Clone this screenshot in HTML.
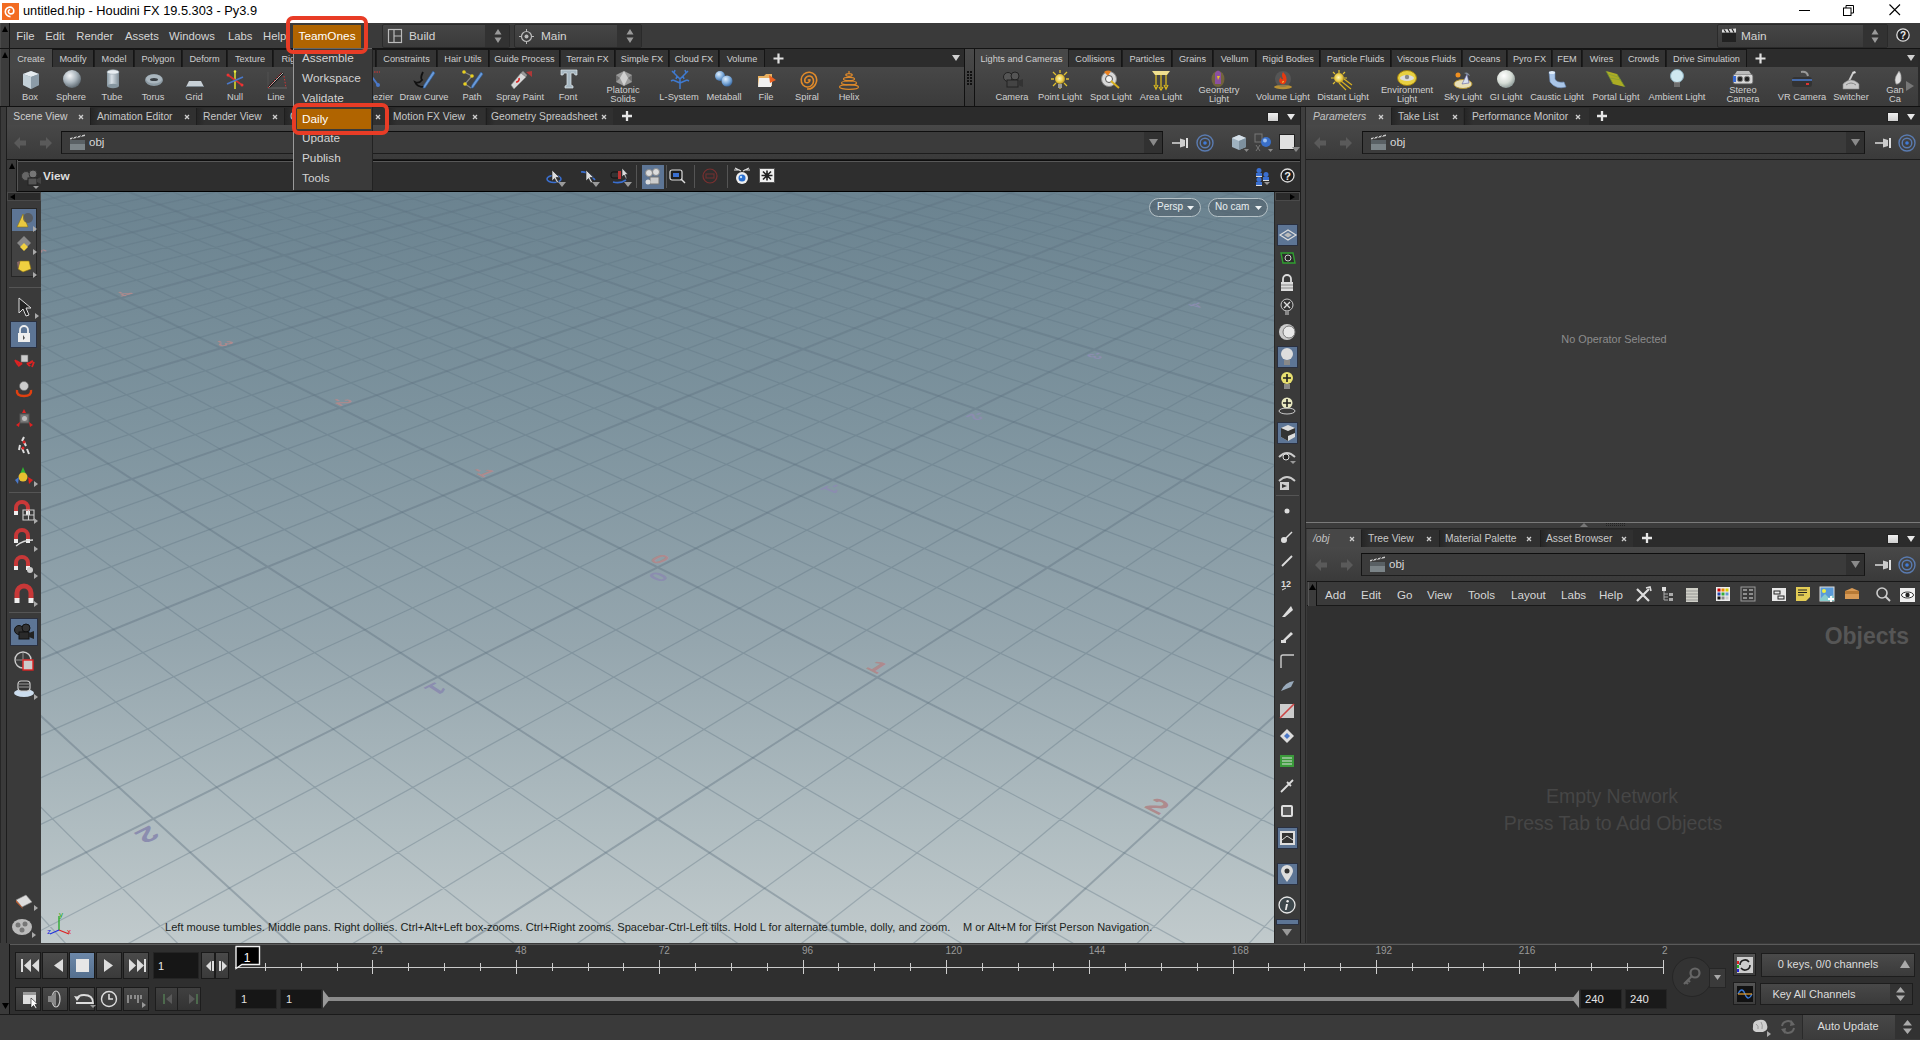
<!DOCTYPE html>
<html><head><meta charset="utf-8"><title>Houdini FX</title>
<style>
html,body{margin:0;padding:0}
body{width:1920px;height:1040px;overflow:hidden;position:relative;background:#3a3a3a;font-family:"Liberation Sans",sans-serif}
.a{position:absolute;box-sizing:border-box}
.t{position:absolute;white-space:pre;line-height:1}
svg.a{overflow:visible}
</style></head><body>
<div class="a" style="left:0px;top:0px;width:1920px;height:23px;background:#ffffff"></div>
<svg class="a" style="left:2px;top:3px;" width="17" height="17" viewBox="0 0 17 17"><rect x="0" y="0" width="17" height="17" fill="#f26b21"/><path d="M8.5 13.6c-2.9 0-5.2-2.2-5.2-4.9 0-2.6 2.1-4.6 4.6-4.6 2.2 0 3.9 1.7 3.9 3.8 0 1.7-1.3 3-3 3-1.4 0-2.4-1-2.4-2.3 0-1 .8-1.8 1.8-1.8" fill="none" stroke="#fff" stroke-width="1.6"/></svg>
<div class="t" style="left:23px;top:5.46px;font-size:12.8px;color:#000000;">untitled.hip - Houdini FX 19.5.303 - Py3.9</div>
<div class="a" style="left:1799px;top:10px;width:11px;height:1px;background:#000"></div>
<svg class="a" style="left:1843px;top:5px;" width="12" height="12" viewBox="0 0 12 12"><rect x="0.5" y="3" width="7.5" height="7.5" fill="none" stroke="#000" stroke-width="1"/><path d="M3 3V0.5H10.5V8H8" fill="none" stroke="#000" stroke-width="1"/></svg>
<svg class="a" style="left:1889px;top:4px;" width="12" height="12" viewBox="0 0 12 12"><path d="M0.5 0.5L11 11M11 0.5L0.5 11" stroke="#000" stroke-width="1.1"/></svg>
<div class="a" style="left:0px;top:23px;width:1920px;height:26px;background:#3a3a3a;border-bottom:1px solid #141414"></div>
<div class="a" style="left:0px;top:23px;width:10px;height:25px;background:#3c3c3c;border-left:1px solid #4a4a4a;border-right:1px solid #111"></div>
<svg class="a" style="left:2px;top:26px;" width="6" height="6" viewBox="0 0 6 6"><path d="M3 0L6 6H0Z" fill="#000"/></svg>
<div class="t" style="left:16.3px;top:31.43px;font-size:11.3px;color:#d6d6d6;">File</div>
<div class="t" style="left:45.3px;top:31.43px;font-size:11.3px;color:#d6d6d6;">Edit</div>
<div class="t" style="left:76.3px;top:31.43px;font-size:11.3px;color:#d6d6d6;">Render</div>
<div class="t" style="left:125px;top:31.43px;font-size:11.3px;color:#d6d6d6;">Assets</div>
<div class="t" style="left:169px;top:31.43px;font-size:11.3px;color:#d6d6d6;">Windows</div>
<div class="t" style="left:228px;top:31.43px;font-size:11.3px;color:#d6d6d6;">Labs</div>
<div class="t" style="left:263px;top:31.43px;font-size:11.3px;color:#d6d6d6;">Help</div>
<div class="a" style="left:382px;top:24px;width:128px;height:24px;background:linear-gradient(#454545,#3a3a3a);border:1px solid #2a2a2a;border-radius:2px"></div>
<div class="a" style="left:485px;top:25px;width:24px;height:22px;background:#323232"></div>
<svg class="a" style="left:494px;top:28px;" width="8" height="16" viewBox="0 0 8 16"><path d="M4 1L7.5 6.5H0.5Z M4 15L7.5 9.5H0.5Z" fill="#9a9a9a"/></svg>
<svg class="a" style="left:388px;top:29px" width="15" height="15"><rect x="0.5" y="0.5" width="13" height="13" fill="none" stroke="#bbb" stroke-width="1.2"/><path d="M6 0.5V13.5M6 7H13.5" stroke="#bbb" stroke-width="1.2"/></svg>
<div class="t" style="left:409px;top:30.51px;font-size:11.8px;color:#d4d4d4;">Build</div>
<div class="a" style="left:514px;top:24px;width:128px;height:24px;background:linear-gradient(#454545,#3a3a3a);border:1px solid #2a2a2a;border-radius:2px"></div>
<div class="a" style="left:617px;top:25px;width:24px;height:22px;background:#323232"></div>
<svg class="a" style="left:626px;top:28px;" width="8" height="16" viewBox="0 0 8 16"><path d="M4 1L7.5 6.5H0.5Z M4 15L7.5 9.5H0.5Z" fill="#9a9a9a"/></svg>
<svg class="a" style="left:519px;top:29px" width="15" height="15"><circle cx="7.5" cy="7.5" r="5" fill="none" stroke="#bbb" stroke-width="1.2"/><circle cx="7.5" cy="7.5" r="2" fill="#bbb"/><path d="M7.5 0V3M7.5 12V15M0 7.5H3M12 7.5H15" stroke="#bbb"/></svg>
<div class="t" style="left:541px;top:30.51px;font-size:11.8px;color:#d4d4d4;">Main</div>
<div class="a" style="left:1717px;top:24px;width:171px;height:24px;background:linear-gradient(#454545,#3a3a3a);border:1px solid #2a2a2a;border-radius:2px"></div>
<div class="a" style="left:1863px;top:25px;width:24px;height:22px;background:#323232"></div>
<svg class="a" style="left:1871px;top:28px;" width="8" height="16" viewBox="0 0 8 16"><path d="M4 1L7.5 6.5H0.5Z M4 15L7.5 9.5H0.5Z" fill="#9a9a9a"/></svg>
<svg class="a" style="left:1721px;top:28px;" width="16" height="15" viewBox="0 0 16 15"><rect x="1" y="5" width="14" height="9" fill="#222"/><path d="M1 1.5L15 0.5V4.5H1Z" fill="#ddd"/><path d="M3 1.5L5 4.5M7 1L9 4.5M11 0.8L13 4.5" stroke="#222" stroke-width="1.2"/></svg>
<div class="t" style="left:1741px;top:30.51px;font-size:11.8px;color:#d4d4d4;">Main</div>
<svg class="a" style="left:1896px;top:28px;" width="14" height="14" viewBox="0 0 14 14"><circle cx="7" cy="7" r="6.2" fill="#222" stroke="#ddd" stroke-width="1.3"/><text x="7" y="11" font-size="10" font-weight="bold" text-anchor="middle" fill="#eee" font-family="Liberation Sans">?</text></svg>
<div class="a" style="left:0px;top:49px;width:10px;height:57px;background:#3c3c3c;border-left:1px solid #4a4a4a;border-right:1px solid #111"></div>
<svg class="a" style="left:2px;top:52px;" width="6" height="6" viewBox="0 0 6 6"><path d="M3 0L6 6H0Z" fill="#000"/></svg>
<div class="a" style="left:10px;top:49px;width:954px;height:57px;background:#3f3f3f;border-left:1px solid #111"></div>
<div class="a" style="left:10px;top:49px;width:954px;height:18px;background:#2c2c2c"></div>
<div class="a" style="left:10px;top:49px;width:42px;height:19px;background:#474747"></div>
<div class="t" style="left:-269.0px;width:600px;text-align:center;top:54.51px;font-size:9.2px;color:#cfcfcf;">Create</div>
<div class="a" style="left:52px;top:49px;width:42px;height:18px;background:#333333;border:1px solid #151515;border-bottom:none;border-left-color:#1d1d1d"></div>
<div class="t" style="left:-227.0px;width:600px;text-align:center;top:54.51px;font-size:9.2px;color:#cfcfcf;">Modify</div>
<div class="a" style="left:94px;top:49px;width:40px;height:18px;background:#333333;border:1px solid #151515;border-bottom:none;border-left-color:#1d1d1d"></div>
<div class="t" style="left:-186.0px;width:600px;text-align:center;top:54.51px;font-size:9.2px;color:#cfcfcf;">Model</div>
<div class="a" style="left:134px;top:49px;width:48px;height:18px;background:#333333;border:1px solid #151515;border-bottom:none;border-left-color:#1d1d1d"></div>
<div class="t" style="left:-142.0px;width:600px;text-align:center;top:54.51px;font-size:9.2px;color:#cfcfcf;">Polygon</div>
<div class="a" style="left:182px;top:49px;width:45px;height:18px;background:#333333;border:1px solid #151515;border-bottom:none;border-left-color:#1d1d1d"></div>
<div class="t" style="left:-95.5px;width:600px;text-align:center;top:54.51px;font-size:9.2px;color:#cfcfcf;">Deform</div>
<div class="a" style="left:227px;top:49px;width:46px;height:18px;background:#333333;border:1px solid #151515;border-bottom:none;border-left-color:#1d1d1d"></div>
<div class="t" style="left:-50.0px;width:600px;text-align:center;top:54.51px;font-size:9.2px;color:#cfcfcf;">Texture</div>
<div class="a" style="left:273px;top:49px;width:48px;height:18px;background:#333333;border:1px solid #151515;border-bottom:none;border-left-color:#1d1d1d"></div>
<div class="t" style="left:-3.0px;width:600px;text-align:center;top:54.51px;font-size:9.2px;color:#cfcfcf;">Rigging</div>
<div class="a" style="left:321px;top:49px;width:55px;height:18px;background:#333333;border:1px solid #151515;border-bottom:none;border-left-color:#1d1d1d"></div>
<div class="t" style="left:48.5px;width:600px;text-align:center;top:54.51px;font-size:9.2px;color:#cfcfcf;">Characters</div>
<div class="a" style="left:376px;top:49px;width:61px;height:18px;background:#333333;border:1px solid #151515;border-bottom:none;border-left-color:#1d1d1d"></div>
<div class="t" style="left:106.5px;width:600px;text-align:center;top:54.51px;font-size:9.2px;color:#cfcfcf;">Constraints</div>
<div class="a" style="left:437px;top:49px;width:52px;height:18px;background:#333333;border:1px solid #151515;border-bottom:none;border-left-color:#1d1d1d"></div>
<div class="t" style="left:163.0px;width:600px;text-align:center;top:54.51px;font-size:9.2px;color:#cfcfcf;">Hair Utils</div>
<div class="a" style="left:489px;top:49px;width:71px;height:18px;background:#333333;border:1px solid #151515;border-bottom:none;border-left-color:#1d1d1d"></div>
<div class="t" style="left:224.5px;width:600px;text-align:center;top:54.51px;font-size:9.2px;color:#cfcfcf;">Guide Process</div>
<div class="a" style="left:560px;top:49px;width:55px;height:18px;background:#333333;border:1px solid #151515;border-bottom:none;border-left-color:#1d1d1d"></div>
<div class="t" style="left:287.5px;width:600px;text-align:center;top:54.51px;font-size:9.2px;color:#cfcfcf;">Terrain FX</div>
<div class="a" style="left:615px;top:49px;width:54px;height:18px;background:#333333;border:1px solid #151515;border-bottom:none;border-left-color:#1d1d1d"></div>
<div class="t" style="left:342.0px;width:600px;text-align:center;top:54.51px;font-size:9.2px;color:#cfcfcf;">Simple FX</div>
<div class="a" style="left:669px;top:49px;width:50px;height:18px;background:#333333;border:1px solid #151515;border-bottom:none;border-left-color:#1d1d1d"></div>
<div class="t" style="left:394.0px;width:600px;text-align:center;top:54.51px;font-size:9.2px;color:#cfcfcf;">Cloud FX</div>
<div class="a" style="left:719px;top:49px;width:46px;height:18px;background:#333333;border:1px solid #151515;border-bottom:none;border-left-color:#1d1d1d"></div>
<div class="t" style="left:442.0px;width:600px;text-align:center;top:54.51px;font-size:9.2px;color:#cfcfcf;">Volume</div>
<svg class="a" style="left:773px;top:53px;" width="11" height="11" viewBox="0 0 11 11"><path d="M5.5 0.5V10.5M0.5 5.5H10.5" stroke="#e0e0e0" stroke-width="2.2"/></svg>
<svg class="a" style="left:952px;top:55px;" width="8" height="6" viewBox="0 0 8 6"><path d="M0 0H8L4 6Z" fill="#d0d0d0"/></svg>
<div class="a" style="left:10px;top:67px;width:954px;height:39px;background:linear-gradient(#474747,#3b3b3b)"></div>
<div class="a" style="left:964px;top:49px;width:11px;height:57px;background:linear-gradient(#4a4a4a,#3a3a3a);border-left:1px solid #111;border-right:1px solid #111"></div>
<svg class="a" style="left:967px;top:71px;" width="6" height="14" viewBox="0 0 6 14"><rect x="0" y="0" width="2" height="2" fill="#111"/><rect x="0" y="3" width="2" height="2" fill="#111"/><rect x="0" y="6" width="2" height="2" fill="#111"/><rect x="0" y="9" width="2" height="2" fill="#111"/><rect x="0" y="12" width="2" height="2" fill="#111"/><rect x="3" y="0" width="2" height="2" fill="#111"/><rect x="3" y="3" width="2" height="2" fill="#111"/><rect x="3" y="6" width="2" height="2" fill="#111"/><rect x="3" y="9" width="2" height="2" fill="#111"/><rect x="3" y="12" width="2" height="2" fill="#111"/></svg>
<div class="a" style="left:975px;top:49px;width:945px;height:57px;background:#3f3f3f"></div>
<div class="a" style="left:975px;top:49px;width:943px;height:18px;background:#2c2c2c"></div>
<div class="a" style="left:975px;top:49px;width:93px;height:19px;background:#474747"></div>
<div class="t" style="left:721.5px;width:600px;text-align:center;top:54.51px;font-size:9.2px;color:#cfcfcf;">Lights and Cameras</div>
<div class="a" style="left:1068px;top:49px;width:54px;height:18px;background:#333333;border:1px solid #151515;border-bottom:none;border-left-color:#1d1d1d"></div>
<div class="t" style="left:795.0px;width:600px;text-align:center;top:54.51px;font-size:9.2px;color:#cfcfcf;">Collisions</div>
<div class="a" style="left:1122px;top:49px;width:50px;height:18px;background:#333333;border:1px solid #151515;border-bottom:none;border-left-color:#1d1d1d"></div>
<div class="t" style="left:847.0px;width:600px;text-align:center;top:54.51px;font-size:9.2px;color:#cfcfcf;">Particles</div>
<div class="a" style="left:1172px;top:49px;width:41px;height:18px;background:#333333;border:1px solid #151515;border-bottom:none;border-left-color:#1d1d1d"></div>
<div class="t" style="left:892.5px;width:600px;text-align:center;top:54.51px;font-size:9.2px;color:#cfcfcf;">Grains</div>
<div class="a" style="left:1213px;top:49px;width:43px;height:18px;background:#333333;border:1px solid #151515;border-bottom:none;border-left-color:#1d1d1d"></div>
<div class="t" style="left:934.5px;width:600px;text-align:center;top:54.51px;font-size:9.2px;color:#cfcfcf;">Vellum</div>
<div class="a" style="left:1256px;top:49px;width:64px;height:18px;background:#333333;border:1px solid #151515;border-bottom:none;border-left-color:#1d1d1d"></div>
<div class="t" style="left:988.0px;width:600px;text-align:center;top:54.51px;font-size:9.2px;color:#cfcfcf;">Rigid Bodies</div>
<div class="a" style="left:1320px;top:49px;width:71px;height:18px;background:#333333;border:1px solid #151515;border-bottom:none;border-left-color:#1d1d1d"></div>
<div class="t" style="left:1055.5px;width:600px;text-align:center;top:54.51px;font-size:9.2px;color:#cfcfcf;">Particle Fluids</div>
<div class="a" style="left:1391px;top:49px;width:71px;height:18px;background:#333333;border:1px solid #151515;border-bottom:none;border-left-color:#1d1d1d"></div>
<div class="t" style="left:1126.5px;width:600px;text-align:center;top:54.51px;font-size:9.2px;color:#cfcfcf;">Viscous Fluids</div>
<div class="a" style="left:1462px;top:49px;width:45px;height:18px;background:#333333;border:1px solid #151515;border-bottom:none;border-left-color:#1d1d1d"></div>
<div class="t" style="left:1184.5px;width:600px;text-align:center;top:54.51px;font-size:9.2px;color:#cfcfcf;">Oceans</div>
<div class="a" style="left:1507px;top:49px;width:45px;height:18px;background:#333333;border:1px solid #151515;border-bottom:none;border-left-color:#1d1d1d"></div>
<div class="t" style="left:1229.5px;width:600px;text-align:center;top:54.51px;font-size:9.2px;color:#cfcfcf;">Pyro FX</div>
<div class="a" style="left:1552px;top:49px;width:30px;height:18px;background:#333333;border:1px solid #151515;border-bottom:none;border-left-color:#1d1d1d"></div>
<div class="t" style="left:1267.0px;width:600px;text-align:center;top:54.51px;font-size:9.2px;color:#cfcfcf;">FEM</div>
<div class="a" style="left:1582px;top:49px;width:39px;height:18px;background:#333333;border:1px solid #151515;border-bottom:none;border-left-color:#1d1d1d"></div>
<div class="t" style="left:1301.5px;width:600px;text-align:center;top:54.51px;font-size:9.2px;color:#cfcfcf;">Wires</div>
<div class="a" style="left:1621px;top:49px;width:45px;height:18px;background:#333333;border:1px solid #151515;border-bottom:none;border-left-color:#1d1d1d"></div>
<div class="t" style="left:1343.5px;width:600px;text-align:center;top:54.51px;font-size:9.2px;color:#cfcfcf;">Crowds</div>
<div class="a" style="left:1666px;top:49px;width:81px;height:18px;background:#333333;border:1px solid #151515;border-bottom:none;border-left-color:#1d1d1d"></div>
<div class="t" style="left:1406.5px;width:600px;text-align:center;top:54.51px;font-size:9.2px;color:#cfcfcf;">Drive Simulation</div>
<svg class="a" style="left:1755px;top:53px;" width="11" height="11" viewBox="0 0 11 11"><path d="M5.5 0.5V10.5M0.5 5.5H10.5" stroke="#e0e0e0" stroke-width="2.2"/></svg>
<svg class="a" style="left:1907px;top:55px;" width="8" height="6" viewBox="0 0 8 6"><path d="M0 0H8L4 6Z" fill="#d0d0d0"/></svg>
<div class="a" style="left:975px;top:67px;width:943px;height:39px;background:linear-gradient(#474747,#3b3b3b)"></div>
<div class="a" style="left:1918px;top:49px;width:2px;height:57px;background:#2a2a2a"></div>
<div class="a" style="left:0px;top:106px;width:1920px;height:1px;background:#111"></div>
<svg width="0" height="0" style="position:absolute"><defs>
<radialGradient id="gs" cx="0.38" cy="0.32" r="0.7"><stop offset="0" stop-color="#f4f6f8"/><stop offset="0.55" stop-color="#a9b4bc"/><stop offset="1" stop-color="#5d6870"/></radialGradient>
<radialGradient id="gy" cx="0.45" cy="0.45" r="0.6"><stop offset="0" stop-color="#fff8c0"/><stop offset="0.6" stop-color="#e8c840"/><stop offset="1" stop-color="#a08020"/></radialGradient>
<radialGradient id="gw" cx="0.38" cy="0.32" r="0.7"><stop offset="0" stop-color="#ffffff"/><stop offset="0.6" stop-color="#d6ddd6"/><stop offset="1" stop-color="#8d9a98"/></radialGradient>
<linearGradient id="gt" x1="0" x2="1"><stop offset="0" stop-color="#8696a0"/><stop offset="0.4" stop-color="#d8e0e6"/><stop offset="1" stop-color="#7d8c96"/></linearGradient>
<radialGradient id="gb" cx="0.38" cy="0.32" r="0.7"><stop offset="0" stop-color="#e0f0ff"/><stop offset="0.6" stop-color="#7aa8d8"/><stop offset="1" stop-color="#3a68a0"/></radialGradient>
</defs></svg>
<svg class="a" style="left:21px;top:70px;" width="20" height="20" viewBox="0 0 20 20"><path d="M2 4L10 1L18 4V15L10 19L2 15Z" fill="#7f8f9a"/><path d="M2 4L10 7L18 4L10 1Z" fill="#e6ecf0"/><path d="M2 4L10 7V19L2 15Z" fill="#c3d0d8"/><path d="M10 7L18 4V15L10 19Z" fill="#8c9ca8"/></svg>
<svg class="a" style="left:62px;top:69px;" width="20" height="20" viewBox="0 0 20 20"><circle cx="10" cy="10" r="9" fill="url(#gs)"/></svg>
<svg class="a" style="left:106px;top:69px;" width="14" height="20" viewBox="0 0 14 20"><rect x="1" y="3" width="12" height="14" fill="url(#gt)"/><ellipse cx="7" cy="17" rx="6" ry="2.2" fill="#8696a0"/><ellipse cx="7" cy="3" rx="6" ry="2.2" fill="#e8eef2" stroke="#9aa8b0" stroke-width="0.6"/></svg>
<svg class="a" style="left:144px;top:73px;" width="20" height="14" viewBox="0 0 20 14"><ellipse cx="10" cy="7" rx="9" ry="6" fill="#8d9ba4"/><ellipse cx="10" cy="6" rx="8" ry="4.5" fill="#aab6be"/><ellipse cx="10" cy="6.5" rx="4" ry="1.6" fill="#3a3f44"/></svg>
<svg class="a" style="left:185px;top:80px;" width="20" height="8" viewBox="0 0 20 8"><path d="M4 1H16L19 7H1Z" fill="#c8d0d6"/><path d="M1 6H19V7H1Z" fill="#7d8890"/></svg>
<svg class="a" style="left:226px;top:70px;" width="18" height="20" viewBox="0 0 18 20"><path d="M9 1V19" stroke="#c8c830" stroke-width="1.8"/><path d="M2 5L16 15" stroke="#d83030" stroke-width="1.6"/><path d="M1 14L17 7" stroke="#4a78c8" stroke-width="1.6"/><circle cx="2" cy="5" r="1.5" fill="#e33"/><circle cx="16" cy="15" r="1.5" fill="#e33"/><circle cx="9" cy="1.5" r="1.3" fill="#ee4"/></svg>
<svg class="a" style="left:266px;top:70px;" width="22" height="20" viewBox="0 0 22 20"><path d="M2 18H21" stroke="#666" stroke-width="1"/><path d="M2 18V2" stroke="#555" stroke-width="0.8"/><path d="M3 17L17 3" stroke="#111" stroke-width="2.4"/><path d="M3 17L17 3" stroke="#ddd" stroke-width="0.8"/><path d="M2 18L16 2M18 6L20 18" stroke="#d33" stroke-width="0.9" stroke-dasharray="1.5 1.5"/></svg>
<svg class="a" style="left:370px;top:71px;" width="12" height="18" viewBox="0 0 12 18"><path d="M2 6L8 14" stroke="#4a78c8" stroke-width="2"/><circle cx="8" cy="14" r="2" fill="#4a78c8"/><path d="M4 1H10" stroke="#d33" stroke-width="1" stroke-dasharray="1.5 1"/></svg>
<svg class="a" style="left:414px;top:70px;" width="22" height="20" viewBox="0 0 22 20"><path d="M9 2Q6 8 8 10Q5 14 1 12Q3 17 10 17" fill="none" stroke="#111" stroke-width="1.8"/><path d="M19 1L21 3L11 18L9 18L10 15Z" fill="#6a9ad8" stroke="#2a5a98" stroke-width="0.6"/></svg>
<svg class="a" style="left:462px;top:70px;" width="22" height="20" viewBox="0 0 22 20"><path d="M2 2L10 6L3 14L9 18" fill="none" stroke="#888" stroke-width="1.2"/><circle cx="2" cy="2" r="1.8" fill="#e8d020"/><circle cx="10" cy="6" r="1.8" fill="#e8d020"/><circle cx="3" cy="14" r="1.8" fill="#e8d020"/><path d="M19 2L21 4L11 18L9 18L10 15Z" fill="#6a9ad8" stroke="#2a5a98" stroke-width="0.6"/></svg>
<svg class="a" style="left:510px;top:70px;" width="22" height="20" viewBox="0 0 22 20"><path d="M4 19L1 15L11 3L16 7Z" fill="#d8d8d8" stroke="#888" stroke-width="0.6"/><path d="M11 3L13 1L17 5L16 7Z" fill="#999"/><path d="M6 12A3 3 0 0 0 9 8" stroke="#d22" stroke-width="1.6" fill="none"/><path d="M16 2L22 1V7Z" fill="#d33" opacity="0.7"/></svg>
<svg class="a" style="left:560px;top:69px;" width="18" height="20" viewBox="0 0 18 20"><path d="M1 1H17V6H15L14 4H11V16L13 17V19H5V17L7 16V4H4L3 6H1Z" fill="#a8b8c2" stroke="#dfe8ee" stroke-width="0.7"/></svg>
<svg class="a" style="left:614px;top:70px;" width="20" height="17" viewBox="0 0 20 17"><path d="M10 1L18 5L18 12L10 16L2 12L2 5Z" fill="#9a9a9a"/><path d="M10 1L14 8L10 16L6 8Z" fill="#d0d0d0"/><path d="M2 5L6 8L2 12Z M18 5L14 8L18 12Z" fill="#6c6c6c"/></svg>
<svg class="a" style="left:670px;top:70px;" width="20" height="20" viewBox="0 0 20 20"><path d="M10 19V9M10 9L4 3M10 9L16 3M10 13L3 10M10 13L17 10M4 3L2 1M4 3L5 0M16 3L18 1M16 3L15 0M3 10L1 11M17 10L19 11M7 6L6 9M13 6L14 9" stroke="#3f7ad0" stroke-width="1.5" fill="none"/></svg>
<svg class="a" style="left:714px;top:70px;" width="20" height="18" viewBox="0 0 20 18"><circle cx="6" cy="6" r="5" fill="url(#gb)"/><circle cx="13" cy="11" r="5.5" fill="url(#gb)"/></svg>
<svg class="a" style="left:757px;top:71px;" width="20" height="18" viewBox="0 0 20 18"><path d="M1 5H7L9 3H15V15H1Z" fill="#e8b060"/><path d="M2 7H16L14 16H1Z" fill="#f0f0f0"/><path d="M12 4L19 9L13 12Z" fill="#e86020"/></svg>
<svg class="a" style="left:798px;top:70px;" width="20" height="20" viewBox="0 0 20 20"><path d="M10 10.5A1.5 1.5 0 0 1 12 10A3 3 0 0 1 7 12A4.5 4.5 0 0 1 14 7A6 6 0 0 1 5 15A7.5 7.5 0 0 1 17 5A9 9 0 0 1 9 19" fill="none" stroke="#e08a2a" stroke-width="1.6"/></svg>
<svg class="a" style="left:838px;top:70px;" width="22" height="20" viewBox="0 0 22 20"><ellipse cx="11" cy="17" rx="9.5" ry="2.3" fill="none" stroke="#e08a2a" stroke-width="1.2"/><ellipse cx="11" cy="13" rx="7.5" ry="2" fill="none" stroke="#e08a2a" stroke-width="1.2"/><ellipse cx="11" cy="9" rx="5.5" ry="1.7" fill="none" stroke="#e08a2a" stroke-width="1.2"/><ellipse cx="11" cy="5" rx="3.2" ry="1.3" fill="none" stroke="#e08a2a" stroke-width="1.2"/><path d="M11 1V3" stroke="#e08a2a" stroke-width="1.2"/></svg>
<svg class="a" style="left:1002px;top:71px;" width="22" height="18" viewBox="0 0 22 18"><circle cx="6" cy="6" r="4.5" fill="#555" stroke="#222"/><circle cx="13" cy="5" r="4" fill="#555" stroke="#222"/><rect x="5" y="9" width="11" height="7" fill="#444" stroke="#222"/><path d="M16 10L21 8V16L16 14Z" fill="#333"/></svg>
<svg class="a" style="left:1049px;top:70px;" width="22" height="20" viewBox="0 0 22 20"><circle cx="11" cy="9" r="5" fill="url(#gy)"/><path d="M11 0V3M11 15V19M2 9H5M17 9H20M4 2L7 5M18 2L15 5M4 16L7 13M18 16L15 13" stroke="#e0c030" stroke-width="1.3"/><rect x="9" y="14" width="4" height="4" fill="#999"/></svg>
<svg class="a" style="left:1100px;top:70px;" width="22" height="20" viewBox="0 0 22 20"><circle cx="9" cy="9" r="7.5" fill="#d8d8d8" stroke="#888"/><path d="M4 2A8 8 0 0 1 11 1L8 6Z" fill="#e88020"/><circle cx="9" cy="9" r="3.5" fill="#f4f4f4" stroke="#555"/><path d="M11 11L19 18" stroke="#d8b020" stroke-width="2"/></svg>
<svg class="a" style="left:1150px;top:70px;" width="22" height="20" viewBox="0 0 22 20"><path d="M2 1H20L17 5H5Z" fill="#f0e090"/><path d="M6 5V16M11 5V18M16 5V16" stroke="#d8b820" stroke-width="1.3"/><path d="M4 15L6 19L8 15M9 17L11 20L13 17M14 15L16 19L18 15" fill="none" stroke="#d8b820" stroke-width="1.3"/></svg>
<svg class="a" style="left:1211px;top:69px;" width="14" height="18" viewBox="0 0 14 18"><ellipse cx="7" cy="10" rx="6.5" ry="8" fill="#c8a030" opacity="0.35"/><path d="M4 4Q7 -1 10 4V15H4Z" fill="#8a50a0"/><path d="M6 7H9L7 11Z" fill="#e8c020"/></svg>
<svg class="a" style="left:1273px;top:70px;" width="20" height="20" viewBox="0 0 20 20"><ellipse cx="10" cy="17" rx="9" ry="2.2" fill="#e8b030" opacity="0.7"/><circle cx="10" cy="9" r="8" fill="#666" opacity="0.5"/><path d="M10 2Q15 7 13 12Q11 16 7 13Q5 10 8 7Q8 10 10 9Q8 5 10 2Z" fill="#e83a10"/><path d="M9 13Q10 9 11 12Z" fill="#f8d040"/></svg>
<svg class="a" style="left:1331px;top:70px;" width="22" height="20" viewBox="0 0 22 20"><circle cx="8" cy="8" r="5" fill="url(#gy)"/><path d="M8 0V3M0 8H3M2 2L4 4M14 2L12 4M2 14L4 12M13 8H16" stroke="#e0c030" stroke-width="1.2"/><path d="M10 11L20 19M13 9L21 15M8 13L15 20" stroke="#d8b020" stroke-width="1.2"/></svg>
<svg class="a" style="left:1397px;top:69px;" width="20" height="16" viewBox="0 0 20 16"><ellipse cx="10" cy="9" rx="9.5" ry="7.5" fill="#e8d040" stroke="#a08010"/><ellipse cx="10" cy="9" rx="7" ry="3" fill="#ddd"/><circle cx="10" cy="8" r="2.2" fill="#888"/></svg>
<svg class="a" style="left:1453px;top:70px;" width="20" height="20" viewBox="0 0 20 20"><ellipse cx="10" cy="14" rx="9" ry="4.5" fill="#e8dfb8" stroke="#b09030"/><path d="M9 14L14 4L16 13Z" fill="#d8e0f0" stroke="#6060a0" stroke-width="0.6"/><circle cx="5" cy="5" r="2.5" fill="#f09020"/><path d="M11 3Q15 1 17 6" fill="#9ab" opacity="0.7"/></svg>
<svg class="a" style="left:1496px;top:69px;" width="20" height="20" viewBox="0 0 20 20"><circle cx="10" cy="10" r="9" fill="url(#gw)"/></svg>
<svg class="a" style="left:1546px;top:70px;" width="22" height="20" viewBox="0 0 22 20"><path d="M3 2H9V9Q11 13 18 12L20 17Q10 20 4 12Z" fill="#aac6e8" stroke="#6a8ab8" stroke-width="0.6"/><ellipse cx="6" cy="2.5" rx="3" ry="1.5" fill="#e0ecf8"/></svg>
<svg class="a" style="left:1605px;top:70px;" width="22" height="20" viewBox="0 0 22 20"><path d="M1 1L12 4L20 17L8 14Z" fill="#b8b820" opacity="0.9"/><path d="M1 1L8 14M12 4L20 17" stroke="#6a8a30" stroke-width="0.8"/><path d="M5 8L16 10M3 4L13 7" stroke="#7a9a40" stroke-width="0.6"/></svg>
<svg class="a" style="left:1670px;top:69px;" width="14" height="20" viewBox="0 0 14 20"><circle cx="7" cy="7" r="6.5" fill="#cfe8f0" stroke="#88aab8"/><rect x="4" y="13" width="6" height="5" fill="#888"/><path d="M4 15H10M4 17H10" stroke="#555"/></svg>
<svg class="a" style="left:1732px;top:70px;" width="22" height="16" viewBox="0 0 22 16"><rect x="1" y="4" width="20" height="10" rx="2" fill="#d8d8d8" stroke="#555"/><rect x="1" y="6" width="3" height="6" fill="#3a6ad0"/><circle cx="8" cy="9" r="2.8" fill="#222" stroke="#888"/><circle cx="15" cy="9" r="2.8" fill="#222" stroke="#888"/><path d="M3 4L5 1H17L19 4" fill="#bbb"/></svg>
<svg class="a" style="left:1791px;top:71px;" width="22" height="18" viewBox="0 0 22 18"><path d="M10 1Q16 0 17 5" stroke="#999" stroke-width="2" fill="none"/><rect x="1" y="6" width="20" height="10" rx="3" fill="#333"/><path d="M1 9H21" stroke="#4a78c8" stroke-width="1.6"/><rect x="15" y="12" width="3" height="2" fill="#d33"/></svg>
<svg class="a" style="left:1842px;top:70px;" width="18" height="20" viewBox="0 0 18 20"><path d="M10 2L13 1L14 3L11 4Z" fill="#ddd"/><path d="M11 3L7 11" stroke="#ccc" stroke-width="1.8"/><path d="M1 14Q9 6 17 14V19H1Z" fill="#c8c8c8" stroke="#888" stroke-width="0.6"/><path d="M4 15Q9 11 14 15" stroke="#888" fill="none"/></svg>
<svg class="a" style="left:1893px;top:70px;" width="10" height="16" viewBox="0 0 10 16"><path d="M6 1Q9 4 8 11Q6 15 3 14Q1 10 3 6Z" fill="#ddd" stroke="#888" stroke-width="0.6"/></svg>
<div class="a" style="left:1918px;top:49px;width:2px;height:57px;background:#2a2a2a"></div>
<div class="t" style="left:-270px;width:600px;text-align:center;top:93.13px;font-size:9.3px;color:#d0d0d0;">Box</div>
<div class="t" style="left:-229px;width:600px;text-align:center;top:93.13px;font-size:9.3px;color:#d0d0d0;">Sphere</div>
<div class="t" style="left:-188px;width:600px;text-align:center;top:93.13px;font-size:9.3px;color:#d0d0d0;">Tube</div>
<div class="t" style="left:-147px;width:600px;text-align:center;top:93.13px;font-size:9.3px;color:#d0d0d0;">Torus</div>
<div class="t" style="left:-106px;width:600px;text-align:center;top:93.13px;font-size:9.3px;color:#d0d0d0;">Grid</div>
<div class="t" style="left:-65px;width:600px;text-align:center;top:93.13px;font-size:9.3px;color:#d0d0d0;">Null</div>
<div class="t" style="left:-24px;width:600px;text-align:center;top:93.13px;font-size:9.3px;color:#d0d0d0;">Line</div>
<div class="t" style="left:80px;width:600px;text-align:center;top:93.13px;font-size:9.3px;color:#d0d0d0;">Bezier</div>
<div class="t" style="left:124px;width:600px;text-align:center;top:93.13px;font-size:9.3px;color:#d0d0d0;">Draw Curve</div>
<div class="t" style="left:172px;width:600px;text-align:center;top:93.13px;font-size:9.3px;color:#d0d0d0;">Path</div>
<div class="t" style="left:220px;width:600px;text-align:center;top:93.13px;font-size:9.3px;color:#d0d0d0;">Spray Paint</div>
<div class="t" style="left:268px;width:600px;text-align:center;top:93.13px;font-size:9.3px;color:#d0d0d0;">Font</div>
<div class="t" style="left:323px;width:600px;text-align:center;top:86.43px;font-size:9.3px;color:#d0d0d0;">Platonic</div>
<div class="t" style="left:323px;width:600px;text-align:center;top:95.43px;font-size:9.3px;color:#d0d0d0;">Solids</div>
<div class="t" style="left:379px;width:600px;text-align:center;top:93.13px;font-size:9.3px;color:#d0d0d0;">L-System</div>
<div class="t" style="left:424px;width:600px;text-align:center;top:93.13px;font-size:9.3px;color:#d0d0d0;">Metaball</div>
<div class="t" style="left:466px;width:600px;text-align:center;top:93.13px;font-size:9.3px;color:#d0d0d0;">File</div>
<div class="t" style="left:507px;width:600px;text-align:center;top:93.13px;font-size:9.3px;color:#d0d0d0;">Spiral</div>
<div class="t" style="left:549px;width:600px;text-align:center;top:93.13px;font-size:9.3px;color:#d0d0d0;">Helix</div>
<div class="t" style="left:712px;width:600px;text-align:center;top:93.13px;font-size:9.3px;color:#d0d0d0;">Camera</div>
<div class="t" style="left:760px;width:600px;text-align:center;top:93.13px;font-size:9.3px;color:#d0d0d0;">Point Light</div>
<div class="t" style="left:811px;width:600px;text-align:center;top:93.13px;font-size:9.3px;color:#d0d0d0;">Spot Light</div>
<div class="t" style="left:861px;width:600px;text-align:center;top:93.13px;font-size:9.3px;color:#d0d0d0;">Area Light</div>
<div class="t" style="left:919px;width:600px;text-align:center;top:86.43px;font-size:9.3px;color:#d0d0d0;">Geometry</div>
<div class="t" style="left:919px;width:600px;text-align:center;top:95.43px;font-size:9.3px;color:#d0d0d0;">Light</div>
<div class="t" style="left:983px;width:600px;text-align:center;top:93.13px;font-size:9.3px;color:#d0d0d0;">Volume Light</div>
<div class="t" style="left:1043px;width:600px;text-align:center;top:93.13px;font-size:9.3px;color:#d0d0d0;">Distant Light</div>
<div class="t" style="left:1107px;width:600px;text-align:center;top:86.43px;font-size:9.3px;color:#d0d0d0;">Environment</div>
<div class="t" style="left:1107px;width:600px;text-align:center;top:95.43px;font-size:9.3px;color:#d0d0d0;">Light</div>
<div class="t" style="left:1163px;width:600px;text-align:center;top:93.13px;font-size:9.3px;color:#d0d0d0;">Sky Light</div>
<div class="t" style="left:1206px;width:600px;text-align:center;top:93.13px;font-size:9.3px;color:#d0d0d0;">GI Light</div>
<div class="t" style="left:1257px;width:600px;text-align:center;top:93.13px;font-size:9.3px;color:#d0d0d0;">Caustic Light</div>
<div class="t" style="left:1316px;width:600px;text-align:center;top:93.13px;font-size:9.3px;color:#d0d0d0;">Portal Light</div>
<div class="t" style="left:1377px;width:600px;text-align:center;top:93.13px;font-size:9.3px;color:#d0d0d0;">Ambient Light</div>
<div class="t" style="left:1443px;width:600px;text-align:center;top:86.43px;font-size:9.3px;color:#d0d0d0;">Stereo</div>
<div class="t" style="left:1443px;width:600px;text-align:center;top:95.43px;font-size:9.3px;color:#d0d0d0;">Camera</div>
<div class="t" style="left:1502px;width:600px;text-align:center;top:93.13px;font-size:9.3px;color:#d0d0d0;">VR Camera</div>
<div class="t" style="left:1551px;width:600px;text-align:center;top:93.13px;font-size:9.3px;color:#d0d0d0;">Switcher</div>
<div class="t" style="left:1595px;width:600px;text-align:center;top:86.43px;font-size:9.3px;color:#d0d0d0;">Gan</div>
<div class="t" style="left:1595px;width:600px;text-align:center;top:95.43px;font-size:9.3px;color:#d0d0d0;">Ca</div>
<svg class="a" style="left:1906px;top:81px;" width="8" height="10" viewBox="0 0 8 10"><path d="M0 0L8 5L0 10Z" fill="#777"/></svg>
<div class="a" style="left:0px;top:107px;width:7px;height:836px;background:#3a3a3a;border-right:1px solid #1d1d1d;border-left:1px solid #262626"></div>
<div class="a" style="left:7px;top:107px;width:1293px;height:18px;background:#2b2b2b"></div>
<div class="a" style="left:7px;top:107px;width:83px;height:19px;background:#474747"></div>
<div class="t" style="left:13.3px;top:112.28px;font-size:10.3px;color:#cfcfcf;">Scene View</div>
<svg class="a" style="left:78px;top:114px;" width="6" height="6" viewBox="0 0 6 6"><path d="M1 1L5 5M5 1L1 5" stroke="#cfcfcf" stroke-width="1.3"/></svg>
<div class="a" style="left:90px;top:108px;width:106px;height:17px;background:linear-gradient(90deg,#262626,#303030 8px,#303030);border-left:1px solid #1e1e1e"></div>
<div class="t" style="left:97px;top:112.28px;font-size:10.3px;color:#c8c8c8;">Animation Editor</div>
<svg class="a" style="left:184px;top:114px;" width="6" height="6" viewBox="0 0 6 6"><path d="M1 1L5 5M5 1L1 5" stroke="#cfcfcf" stroke-width="1.3"/></svg>
<div class="a" style="left:196px;top:108px;width:88px;height:17px;background:linear-gradient(90deg,#262626,#303030 8px,#303030);border-left:1px solid #1e1e1e"></div>
<div class="t" style="left:203px;top:112.28px;font-size:10.3px;color:#c8c8c8;">Render View</div>
<svg class="a" style="left:272px;top:114px;" width="6" height="6" viewBox="0 0 6 6"><path d="M1 1L5 5M5 1L1 5" stroke="#cfcfcf" stroke-width="1.3"/></svg>
<div class="a" style="left:284px;top:108px;width:104px;height:17px;background:linear-gradient(90deg,#262626,#303030 8px,#303030);border-left:1px solid #1e1e1e"></div>
<div class="t" style="left:290px;top:112.28px;font-size:10.3px;color:#c8c8c8;">Composite View</div>
<svg class="a" style="left:375px;top:114px;" width="6" height="6" viewBox="0 0 6 6"><path d="M1 1L5 5M5 1L1 5" stroke="#cfcfcf" stroke-width="1.3"/></svg>
<div class="a" style="left:388px;top:108px;width:97px;height:17px;background:linear-gradient(90deg,#262626,#303030 8px,#303030);border-left:1px solid #1e1e1e"></div>
<div class="t" style="left:393px;top:112.28px;font-size:10.3px;color:#c8c8c8;">Motion FX View</div>
<svg class="a" style="left:472px;top:114px;" width="6" height="6" viewBox="0 0 6 6"><path d="M1 1L5 5M5 1L1 5" stroke="#cfcfcf" stroke-width="1.3"/></svg>
<div class="a" style="left:486px;top:108px;width:127px;height:17px;background:linear-gradient(90deg,#262626,#303030 8px,#303030);border-left:1px solid #1e1e1e"></div>
<div class="t" style="left:491px;top:112.28px;font-size:10.3px;color:#c8c8c8;">Geometry Spreadsheet</div>
<svg class="a" style="left:601px;top:114px;" width="6" height="6" viewBox="0 0 6 6"><path d="M1 1L5 5M5 1L1 5" stroke="#cfcfcf" stroke-width="1.3"/></svg>
<svg class="a" style="left:621px;top:110px;" width="12" height="12" viewBox="0 0 12 12"><path d="M6 1V11M1 6H11" stroke="#e6e6e6" stroke-width="2.3"/></svg>
<div class="a" style="left:1267px;top:112px;width:12px;height:10px;background:linear-gradient(#f0f0f0,#cfcfcf);border:1px solid #222"></div>
<svg class="a" style="left:1287px;top:114px;" width="8" height="6" viewBox="0 0 8 6"><path d="M0 0H8L4 6Z" fill="#e8e8e8"/></svg>
<div class="a" style="left:7px;top:125px;width:1293px;height:34px;background:linear-gradient(#484848,#3a3a3a)"></div>
<svg class="a" style="left:13px;top:136px;" width="40" height="14" viewBox="0 0 40 14"><path d="M1 7L7 1V4.5H13V9.5H7V13Z" fill="#5a5a5a"/><path d="M39 7L33 1V4.5H27V9.5H33V13Z" fill="#5a5a5a"/></svg>
<div class="a" style="left:61px;top:131px;width:1102px;height:23px;background:#3b3b3b;border:1px solid #151515;border-top-color:#0e0e0e;border-bottom-color:#1d1d1d"></div>
<div class="a" style="left:1144px;top:132px;width:18px;height:21px;background:#313131"></div>
<svg class="a" style="left:1149px;top:139px;" width="9" height="7" viewBox="0 0 9 7"><path d="M0 0H9L4.5 7Z" fill="#8a8a8a"/></svg>
<svg class="a" style="left:69px;top:134px;" width="17" height="17" viewBox="0 0 17 17"><rect x="1" y="6" width="15" height="10" fill="#596064"/><rect x="1" y="10" width="15" height="6" fill="#7b8488"/><path d="M1 5.5L16 2V0.5L1 4Z" fill="#ccc"/><path d="M3.5 4.8L5 2.5M7.5 3.9L9 1.6M11.5 3L13 0.8" stroke="#333" stroke-width="1"/></svg>
<div class="t" style="left:89px;top:137.27px;font-size:11.5px;color:#d8d8d8;">obj</div>
<svg class="a" style="left:1172px;top:136px;" width="18" height="14" viewBox="0 0 18 14"><path d="M0 7H8" stroke="#ddd" stroke-width="1.5"/><path d="M8 2.5L13 4V10L8 11.5Z" fill="#ccc"/><rect x="14" y="2" width="2" height="10" fill="#ddd"/></svg>
<svg class="a" style="left:1196px;top:134px;" width="18" height="18" viewBox="0 0 18 18"><circle cx="9" cy="9" r="8" fill="none" stroke="#5a7bb0" stroke-width="1.4"/><circle cx="9" cy="9" r="4.8" fill="none" stroke="#5a7bb0" stroke-width="1.4"/><circle cx="9" cy="9" r="1.8" fill="#3f7ad8"/></svg>
<svg class="a" style="left:1230px;top:133px;" width="20" height="20" viewBox="0 0 20 20"><path d="M2 5L9 2L16 5V14L9 17L2 14Z" fill="#9fb2c0"/><path d="M2 5L9 8L16 5L9 2Z" fill="#d6e0e8"/><path d="M9 8V17L16 14V5Z" fill="#7d909e"/><path d="M14 16H19L16.5 19Z" fill="#888"/></svg>
<svg class="a" style="left:1254px;top:133px;" width="20" height="20" viewBox="0 0 20 20"><rect x="1" y="1" width="7" height="8" fill="none" stroke="#777"/><circle cx="12" cy="9" r="5" fill="#3a6fc8"/><circle cx="11" cy="7.5" r="2" fill="#9cc0f0"/><path d="M2 12L6 18M6 12L2 18" stroke="#777"/><path d="M14 16H19L16.5 19Z" fill="#888"/></svg>
<div class="a" style="left:1279px;top:134px;width:16px;height:16px;background:#e0e0e0;border:1px solid #222"></div>
<svg class="a" style="left:1292px;top:147px;" width="8" height="5" viewBox="0 0 8 5"><path d="M0 0H8L4 5Z" fill="#888"/></svg>
<div class="a" style="left:7px;top:159px;width:1293px;height:1px;background:#1a1a1a"></div>
<div class="a" style="left:7px;top:160px;width:10px;height:32px;background:#3a3a3a;border-right:1px solid #1a1a1a"></div>
<svg class="a" style="left:9px;top:163px;" width="6" height="6" viewBox="0 0 6 6"><path d="M3 0L6 6H0Z" fill="#000"/></svg>
<div class="a" style="left:17px;top:160px;width:1283px;height:32px;background:#2e2e2e;border-top:1px solid #0e0e0e;box-shadow:inset 0 1px 0 #585858"></div>
<div class="a" style="left:17px;top:160px;width:1px;height:32px;background:#555"></div>
<svg class="a" style="left:20px;top:167px;" width="22" height="22" viewBox="0 0 22 22"><circle cx="6" cy="9" r="4.5" fill="#666" stroke="#333"/><circle cx="13" cy="7" r="4" fill="#777" stroke="#333"/><rect x="8" y="11" width="9" height="7" fill="#555" stroke="#222"/><path d="M17 12L21 10V17L17 15Z" fill="#444"/><path d="M13 19H19L16 22Z" fill="#999"/></svg>
<div class="t" style="left:43px;top:170.51px;font-size:11.8px;color:#dddddd;font-weight:bold">View</div>
<svg class="a" style="left:545px;top:168px;" width="20" height="18" viewBox="0 0 20 18"><ellipse cx="9" cy="11" rx="7" ry="3.5" fill="none" stroke="#3a6fd0" stroke-width="1.6"/><path d="M7 2L7 13L9.5 10.5L12 15L13.5 14L11 9.5H14.5Z" fill="#ddd" stroke="#222" stroke-width="0.6"/></svg>
<svg class="a" style="left:558px;top:182px;" width="8" height="5" viewBox="0 0 8 5"><path d="M0 0H8L4 5Z" fill="#9a9a9a"/></svg>
<svg class="a" style="left:579px;top:168px;" width="20" height="18" viewBox="0 0 20 18"><path d="M2 4Q9 3 16 12" fill="none" stroke="#3a6fd0" stroke-width="1.6"/><path d="M7 2L7 13L9.5 10.5L12 15L13.5 14L11 9.5H14.5Z" fill="#ddd" stroke="#222" stroke-width="0.6"/></svg>
<svg class="a" style="left:592px;top:182px;" width="8" height="5" viewBox="0 0 8 5"><path d="M0 0H8L4 5Z" fill="#9a9a9a"/></svg>
<svg class="a" style="left:610px;top:167px;" width="22" height="18" viewBox="0 0 22 18"><rect x="1" y="5" width="9" height="6" rx="2" fill="#333" stroke="#111"/><rect x="8" y="4" width="3" height="8" fill="#b33"/><path d="M3 15Q10 17 16 13" fill="none" stroke="#3a6fd0" stroke-width="1.8"/><path d="M12 1L12 10L14 8L16 12L17 11.5L15.5 7.5H18Z" fill="#ddd" stroke="#222" stroke-width="0.6"/></svg>
<svg class="a" style="left:624px;top:182px;" width="8" height="5" viewBox="0 0 8 5"><path d="M0 0H8L4 5Z" fill="#9a9a9a"/></svg>
<div class="a" style="left:636px;top:165px;width:1px;height:23px;background:#555"></div>
<div class="a" style="left:642px;top:165px;width:22px;height:24px;background:#5d7595"></div>
<svg class="a" style="left:644px;top:167px;" width="18" height="20" viewBox="0 0 18 20"><circle cx="5" cy="6" r="3.5" fill="#ddd" stroke="#888"/><circle cx="12" cy="5" r="3.5" fill="#ddd" stroke="#888"/><rect x="6" y="10" width="9" height="7" fill="#ccc" stroke="#777"/><circle cx="4" cy="15" r="2.5" fill="#ddd"/></svg>
<div class="a" style="left:666px;top:165px;width:1px;height:23px;background:#555"></div>
<svg class="a" style="left:669px;top:169px;" width="18" height="16" viewBox="0 0 18 16"><rect x="1" y="1" width="12" height="10" rx="2" fill="#1d1d1d" stroke="#ddd" stroke-width="1.2"/><rect x="4" y="4" width="6" height="4" fill="#3a6fd0"/><path d="M12 10L16 14" stroke="#ddd" stroke-width="1.4"/></svg>
<div class="a" style="left:694px;top:165px;width:1px;height:23px;background:#555"></div>
<svg class="a" style="left:702px;top:168px;" width="16" height="16" viewBox="0 0 16 16"><circle cx="8" cy="8" r="7" fill="none" stroke="#7a3030" stroke-width="1.2"/><rect x="4" y="6" width="8" height="4" fill="none" stroke="#6a3030" stroke-width="1.2"/></svg>
<div class="a" style="left:727px;top:165px;width:1px;height:23px;background:#555"></div>
<svg class="a" style="left:733px;top:167px;" width="18" height="18" viewBox="0 0 18 18"><path d="M1 3H7M11 3H17M2 1L8 4M16 1L10 4" stroke="#ddd" stroke-width="1.2"/><circle cx="9" cy="11" r="6" fill="#eee"/><circle cx="9" cy="11" r="3.5" fill="#2a6fd0"/><circle cx="8" cy="10" r="1.2" fill="#bfe0ff"/></svg>
<div class="a" style="left:759px;top:168px;width:16px;height:15px;background:#f0f0f0;border:1px solid #555"></div>
<svg class="a" style="left:761px;top:170px;" width="12" height="11" viewBox="0 0 12 11"><path d="M6 0.5V10.5M0.5 5.5H11.5M2 1.5L10 9.5M10 1.5L2 9.5" stroke="#222" stroke-width="1.6"/><circle cx="6" cy="5.5" r="2.3" fill="#222"/></svg>
<svg class="a" style="left:1254px;top:167px;" width="20" height="20" viewBox="0 0 20 20"><circle cx="5" cy="3.5" r="2.5" fill="#3a6fd0"/><rect x="2" y="6" width="6" height="3" fill="#3a6fd0"/><path d="M2 9.5H8" stroke="#ddd"/><circle cx="12" cy="7.5" r="2.5" fill="#3a6fd0"/><rect x="9" y="10" width="6" height="3" fill="#3a6fd0"/><path d="M9 13.5H15" stroke="#ddd"/><circle cx="5" cy="12.5" r="2.5" fill="#3a6fd0"/><rect x="2" y="15" width="6" height="3" fill="#3a6fd0"/><path d="M2 18.5H8" stroke="#ddd"/><path d="M10 15H16L13 18Z" fill="#999"/></svg>
<svg class="a" style="left:1280px;top:168px;" width="15" height="15" viewBox="0 0 15 15"><circle cx="7.5" cy="7.5" r="6.5" fill="#1d1d1d" stroke="#ddd" stroke-width="1.3"/><text x="7.5" y="11.6" font-size="11" font-weight="bold" text-anchor="middle" fill="#eee" font-family="Liberation Sans">?</text></svg>
<div class="a" style="left:17px;top:191px;width:1283px;height:1px;background:#0a0a0a"></div>
<div class="a" style="left:41px;top:192px;width:1233px;height:751px;background:linear-gradient(#6b8390 0%,#7d939e 30%,#95a6ae 60%,#b0bdc1 85%,#c1cacc 100%)"></div>
<svg class="a" style="left:41px;top:192px;overflow:hidden" width="1233" height="751" viewBox="0 0 1233 751"><defs><linearGradient id="fadeg" x1="0" y1="0" x2="0" y2="1"><stop offset="0" stop-color="#fff" stop-opacity="0.7"/><stop offset="0.45" stop-color="#fff" stop-opacity="0.92"/><stop offset="1" stop-color="#fff" stop-opacity="1"/></linearGradient><mask id="fade" maskUnits="userSpaceOnUse" x="0" y="0" width="1233" height="751"><rect width="1233" height="751" fill="url(#fadeg)"/></mask></defs><g mask="url(#fade)"><path d="M630.8 -177.3L-996.7 113.7M602.8 -177.4L2221.1 118.7M645.0 -174.8L-994.8 123.5M588.6 -174.9L2219.3 128.4M659.4 -172.2L-992.9 133.5M574.1 -172.3L2217.4 138.3M674.1 -169.5L-990.9 143.9M559.4 -169.7L2215.4 148.6M704.3 -164.1L-986.7 165.7M529.3 -164.4L2211.3 170.3M719.7 -161.3L-984.6 177.2M513.8 -161.7L2209.1 181.7M735.4 -158.5L-982.3 189.0M498.1 -159.0L2206.9 193.5M751.4 -155.6L-979.9 201.4M482.1 -156.1L2204.6 205.8M784.2 -149.7L-975.0 227.4M449.2 -150.4L2199.6 231.6M801.1 -146.7L-972.3 241.1M432.4 -147.4L2197.0 245.3M818.2 -143.6L-969.6 255.4M415.2 -144.4L2194.3 259.5M835.7 -140.4L-966.7 270.3M397.7 -141.3L2191.5 274.3M871.5 -134.0L-960.7 301.9M361.8 -135.0L2185.5 305.7M890.0 -130.6L-957.5 318.7M343.3 -131.7L2182.3 322.4M908.8 -127.3L-954.2 336.2M324.5 -128.4L2179.0 339.8M927.9 -123.8L-950.7 354.5M305.3 -125.0L2175.6 358.0M967.3 -116.7L-943.2 393.6M265.8 -118.1L2168.2 396.9M987.6 -113.1L-939.2 414.5M245.5 -114.5L2164.2 417.7M1008.2 -109.4L-935.0 436.5M224.8 -110.9L2160.0 439.5M1029.3 -105.6L-930.6 459.6M203.6 -107.2L2155.7 462.5M1072.8 -97.7L-921.1 509.3M160.0 -99.5L2146.2 511.9M1095.1 -93.7L-915.9 536.2M137.6 -95.5L2141.2 538.6M1118.0 -89.6L-910.5 564.5M114.7 -91.5L2135.8 566.8M1141.3 -85.4L-904.8 594.5M91.2 -87.4L2130.1 596.6M1189.5 -76.7L-892.3 659.8M42.9 -78.9L2117.7 661.6M1214.3 -72.2L-885.5 695.5M17.9 -74.5L2111.0 697.1M1239.7 -67.7L-878.2 733.5M-7.6 -70.0L2103.8 734.9M1265.7 -63.0L-870.5 774.0M-33.7 -65.4L2096.1 775.2M1319.4 -53.3L-853.3 863.7M-87.6 -55.9L2079.1 864.4M1347.2 -48.3L-843.8 913.4M-115.5 -51.0L2069.7 913.9M1375.6 -43.2L-833.6 966.9M-144.1 -46.0L2059.5 967.1M1404.6 -38.0L-822.5 1024.7M-173.3 -40.8L2048.6 1024.6M1464.8 -27.1L-797.6 1155.2M-233.8 -30.2L2023.9 1154.5M1496.0 -21.5L-783.4 1229.3M-265.2 -24.7L2009.8 1228.2M1528.0 -15.8L-767.9 1310.3M-297.4 -19.0L1994.5 1308.9M1560.8 -9.9L-750.9 1399.4M-330.4 -13.2L1977.6 1397.5M1628.8 2.4L-711.3 1606.8M-398.9 -1.2L1938.2 1604.0M1664.1 8.7L-688.0 1728.5M-434.5 5.1L1915.1 1725.2M1700.4 15.3L-661.9 1865.3M-471.0 11.5L1889.2 1861.4M1737.6 22.0L-632.3 2020.0M-508.5 18.1L1859.8 2015.6M1815.0 35.9L-559.7 2399.5M-586.6 31.9L1787.8 2393.9M1855.4 43.2L-514.5 2635.9M-627.2 39.0L1742.9 2629.5M1896.8 50.6L-461.3 2914.3M-669.1 46.4L1690.0 2907.2M1939.4 58.3L-397.7 3247.1M-712.1 53.9L1626.8 3239.3M2028.4 74.3L-224.1 4155.5M-801.9 69.7L1454.0 4146.3M2074.9 82.7L-101.2 4798.0M-848.8 78.0L1331.7 4788.6M2122.8 91.3L61.0 5646.8M-897.2 86.5L1169.9 5637.9M2172.1 100.2L285.3 6820.1M-947.1 95.3L946.0 6813.4" stroke="#56697a" stroke-opacity="0.33" stroke-width="1.25" fill="none"/><path d="M616.8 -179.8L-998.5 104.3M616.8 -179.8L2222.9 109.3M689.1 -166.8L-988.9 154.6M544.5 -167.1L2213.4 159.3M767.7 -152.7L-977.5 214.1M465.8 -153.3L2202.1 218.5M853.4 -137.2L-963.8 285.8M379.9 -138.2L2188.6 289.7M947.4 -120.3L-947.0 373.6M285.7 -121.6L2171.9 377.0M1050.8 -101.7L-925.9 483.8M182.1 -103.4L2151.1 486.5M1165.2 -81.1L-898.7 626.2M67.3 -83.2L2124.1 628.2M1292.3 -58.2L-862.2 817.3M-60.3 -60.7L2087.9 818.3M1434.4 -32.6L-810.6 1087.3M-203.2 -35.6L2036.7 1086.9M1594.4 -3.8L-732.1 1497.7M-364.2 -7.3L1958.9 1495.4M1775.8 28.8L-598.5 2196.4M-547.0 24.9L1826.4 2191.4M1983.3 66.2L-320.3 3652.1M-756.3 61.7L1549.8 3643.5M2222.9 109.3L615.6 8548.0M-998.5 104.3L615.6 8548.0" stroke="#56697a" stroke-opacity="0.38" stroke-width="2.0" fill="none"/></g></svg>
<svg class="a" style="left:41px;top:192px;overflow:hidden" width="1233" height="751" viewBox="0 0 1233 751"><text transform="matrix(69.359 34.640 -163.091 34.245 -79.18 24.83)" font-size="0.095" font-family="Liberation Sans" font-weight="bold" fill="#ae8a8d" text-anchor="end">-6</text><text transform="matrix(79.701 39.805 -169.445 39.398 -4.83 61.96)" font-size="0.095" font-family="Liberation Sans" font-weight="bold" fill="#ae8a8d" text-anchor="end">-5</text><text transform="matrix(92.542 46.218 -175.885 45.800 81.06 104.85)" font-size="0.095" font-family="Liberation Sans" font-weight="bold" fill="#ae8a8d" text-anchor="end">-4</text><text transform="matrix(108.755 54.315 -182.187 53.887 181.38 154.96)" font-size="0.095" font-family="Liberation Sans" font-weight="bold" fill="#ae8a8d" text-anchor="end">-3</text><text transform="matrix(129.635 64.743 -187.945 64.308 300.11 214.25)" font-size="0.095" font-family="Liberation Sans" font-weight="bold" fill="#ae8a8d" text-anchor="end">-2</text><text transform="matrix(157.160 78.490 -192.428 78.055 442.85 285.54)" font-size="0.095" font-family="Liberation Sans" font-weight="bold" fill="#ae8a8d" text-anchor="end">-1</text><text transform="matrix(194.482 97.129 -194.288 96.704 617.67 372.85)" font-size="0.095" font-family="Liberation Sans" font-weight="bold" fill="#ae8a8d" text-anchor="end">0</text><text transform="matrix(246.866 123.291 -190.977 122.896 836.78 482.28)" font-size="0.095" font-family="Liberation Sans" font-weight="bold" fill="#ae8a8d" text-anchor="end">1</text><text transform="matrix(323.662 161.645 -177.434 161.315 1119.45 623.45)" font-size="0.095" font-family="Liberation Sans" font-weight="bold" fill="#ae8a8d" text-anchor="end">2</text><text transform="matrix(-69.110 34.610 -163.185 -35.004 1314.12 29.34)" font-size="0.095" font-family="Liberation Sans" font-weight="bold" fill="#8b8daf" text-anchor="start">-6</text><text transform="matrix(-79.504 39.816 -169.680 -40.222 1240.00 66.46)" font-size="0.095" font-family="Liberation Sans" font-weight="bold" fill="#8b8daf" text-anchor="start">-5</text><text transform="matrix(-92.433 46.290 -176.289 -46.708 1154.27 109.39)" font-size="0.095" font-family="Liberation Sans" font-weight="bold" fill="#8b8daf" text-anchor="start">-4</text><text transform="matrix(-108.792 54.483 -182.792 -54.910 1054.00 159.61)" font-size="0.095" font-family="Liberation Sans" font-weight="bold" fill="#8b8daf" text-anchor="start">-3</text><text transform="matrix(-129.911 65.060 -188.787 -65.494 935.11 219.15)" font-size="0.095" font-family="Liberation Sans" font-weight="bold" fill="#8b8daf" text-anchor="start">-2</text><text transform="matrix(-157.835 79.044 -193.536 -79.478 791.92 290.86)" font-size="0.095" font-family="Liberation Sans" font-weight="bold" fill="#8b8daf" text-anchor="start">-1</text><text transform="matrix(-195.834 98.074 -195.675 -98.498 616.11 378.90)" font-size="0.095" font-family="Liberation Sans" font-weight="bold" fill="#8b8daf" text-anchor="start">0</text><text transform="matrix(-249.410 124.905 -192.589 -125.298 395.11 489.58)" font-size="0.095" font-family="Liberation Sans" font-weight="bold" fill="#8b8daf" text-anchor="start">1</text><text transform="matrix(-328.404 164.465 -179.037 -164.790 108.92 632.90)" font-size="0.095" font-family="Liberation Sans" font-weight="bold" fill="#8b8daf" text-anchor="start">2</text></svg>
<div class="a" style="left:41px;top:191px;width:1233px;height:1px;background:#000"></div>
<div class="a" style="left:1149px;top:198px;width:52px;height:19px;background:rgba(70,85,95,0.45);border:1px solid #b4c0c5;border-radius:10px"></div>
<div class="t" style="left:1157px;top:202.03px;font-size:10px;color:#e8eef0;">Persp</div>
<svg class="a" style="left:1187px;top:206px;" width="7" height="4" viewBox="0 0 7 4"><path d="M0 0H7L3.5 4Z" fill="#eef2f4"/></svg>
<div class="a" style="left:1208px;top:198px;width:60px;height:19px;background:rgba(70,85,95,0.45);border:1px solid #b4c0c5;border-radius:10px"></div>
<div class="t" style="left:1215px;top:202.03px;font-size:10px;color:#e8eef0;">No cam</div>
<svg class="a" style="left:1255px;top:206px;" width="7" height="4" viewBox="0 0 7 4"><path d="M0 0H7L3.5 4Z" fill="#eef2f4"/></svg>
<div class="t" style="left:165px;top:922.10px;font-size:11.1px;color:#1b1f21;">Left mouse tumbles. Middle pans. Right dollies. Ctrl+Alt+Left box-zooms. Ctrl+Right zooms. Spacebar-Ctrl-Left tilts. Hold L for alternate tumble, dolly, and zoom.</div>
<div class="t" style="left:963px;top:922.19px;font-size:11px;color:#1b1f21;">M or Alt+M for First Person Navigation.</div>
<svg class="a" style="left:46px;top:910px;" width="26" height="26" viewBox="0 0 26 26"><path d="M13 20V6" stroke="#22aa22" stroke-width="1.3"/><path d="M13 20L23 24" stroke="#dd2222" stroke-width="1.3"/><path d="M13 20L4 24" stroke="#2233dd" stroke-width="1.3"/><text x="13" y="7" font-size="8" fill="#22aa22" font-family="Liberation Sans">y</text><text x="21" y="24" font-size="8" fill="#dd2222" font-family="Liberation Sans">x</text><text x="1" y="24" font-size="8" fill="#2233dd" font-family="Liberation Sans">z</text></svg>
<div class="a" style="left:7px;top:192px;width:34px;height:751px;background:#3a3a3a"></div>
<div class="a" style="left:7px;top:192px;width:34px;height:9px;background:#2a2a2a;border:1px solid #4a4a4a"></div>
<svg class="a" style="left:10px;top:194px;" width="5" height="6" viewBox="0 0 5 6"><path d="M0 3L5 0V6Z" fill="#000"/></svg>
<div class="a" style="left:1274px;top:192px;width:26px;height:751px;background:#3a3a3a;border-left:1px solid #262626"></div>
<div class="a" style="left:1275px;top:192px;width:25px;height:9px;background:#2a2a2a;border:1px solid #4a4a4a"></div>
<svg class="a" style="left:1290px;top:194px;" width="5" height="6" viewBox="0 0 5 6"><path d="M5 3L0 0V6Z" fill="#000"/></svg>
<div class="a" style="left:1300px;top:107px;width:6px;height:836px;background:#3e3e3e;border-left:1px solid #1d1d1d;border-right:1px solid #262626"></div>
<div class="a" style="left:11px;top:208px;width:26px;height:69px;background:#424242;border:1px solid #262626"></div>
<div class="a" style="left:12px;top:209px;width:24px;height:22px;background:#5d7595"></div>
<svg class="a" style="left:14px;top:211px;" width="20" height="18" viewBox="0 0 20 18"><path d="M3 16L9 3L14 16Z" fill="#e8c840" stroke="#8a7010" stroke-width="0.6"/><circle cx="14" cy="7" r="5" fill="#555" opacity="0.8"/></svg>
<svg class="a" style="left:33px;top:226px;" width="4" height="6" viewBox="0 0 4 6"><path d="M0 0L4 3L0 6Z" fill="#aaa"/></svg>
<svg class="a" style="left:14px;top:234px;" width="20" height="18" viewBox="0 0 20 18"><path d="M10 2L17 9L10 16L3 9Z" fill="#888"/><path d="M10 9L14 13L10 17L6 13Z" fill="#f0d040"/></svg>
<svg class="a" style="left:33px;top:249px;" width="4" height="6" viewBox="0 0 4 6"><path d="M0 0L4 3L0 6Z" fill="#aaa"/></svg>
<svg class="a" style="left:14px;top:257px;" width="20" height="18" viewBox="0 0 20 18"><path d="M6 4L15 4L17 12L9 15L4 12Z" fill="#f0d040" stroke="#8a7010" stroke-width="0.6"/><path d="M3 5L6 4L4 12Z" fill="#866"/></svg>
<svg class="a" style="left:33px;top:272px;" width="4" height="6" viewBox="0 0 4 6"><path d="M0 0L4 3L0 6Z" fill="#aaa"/></svg>
<div class="a" style="left:9px;top:287px;width:32px;height:1px;background:#555"></div>
<svg class="a" style="left:15px;top:296px;" width="20" height="22" viewBox="0 0 20 22"><path d="M4 2V17L8 13L11 20L14 19L11 12H16Z" fill="#222" stroke="#ddd" stroke-width="1"/></svg>
<svg class="a" style="left:35px;top:313px;" width="4" height="6" viewBox="0 0 4 6"><path d="M0 0L4 3L0 6Z" fill="#aaa"/></svg>
<div class="a" style="left:10px;top:321px;width:27px;height:27px;background:#5d7595;border:1px solid #2a3040"></div>
<svg class="a" style="left:16px;top:325px;" width="16" height="18" viewBox="0 0 16 18"><path d="M4 8V5A4 4 0 0 1 12 5V8" fill="none" stroke="#eee" stroke-width="1.8"/><rect x="2" y="8" width="12" height="9" fill="#eee"/><path d="M7 10V15L9 13Z" fill="#555"/></svg>
<svg class="a" style="left:14px;top:351px;" width="20" height="18" viewBox="0 0 20 18"><rect x="7" y="4" width="7" height="7" fill="#ccc" stroke="#666" stroke-width="0.6"/><path d="M2 10L7 13M19 10L14 13M4 15L8 12M16 15L13 12" stroke="#d22" stroke-width="2.2"/><path d="M1 9L4 14M18 16L20 11" stroke="#d22" stroke-width="1.8"/></svg>
<svg class="a" style="left:14px;top:380px;" width="20" height="18" viewBox="0 0 20 18"><circle cx="10" cy="6" r="4.5" fill="#ccc" stroke="#666" stroke-width="0.6"/><path d="M3 10Q2 16 10 16Q18 16 17 10" fill="none" stroke="#e04010" stroke-width="2.4"/></svg>
<svg class="a" style="left:14px;top:408px;" width="20" height="20" viewBox="0 0 20 20"><rect x="6" y="6" width="9" height="9" fill="#777" stroke="#555"/><circle cx="10.5" cy="10.5" r="2.5" fill="#bbb"/><path d="M10 1L8 5H12Z M2 17L6 14L5 19Z M19 17L15 14L16 19Z" fill="#d22"/></svg>
<svg class="a" style="left:15px;top:436px;" width="18" height="20" viewBox="0 0 18 20"><path d="M9 1L7 5M9 6L11 10M7 12L9 17M12 13L14 18M5 9L4 14" stroke="#ddd" stroke-width="2"/><circle cx="9" cy="6" r="1.5" fill="#d22"/><circle cx="8" cy="12" r="1.5" fill="#d22"/></svg>
<svg class="a" style="left:13px;top:465px;" width="22" height="20" viewBox="0 0 22 20"><path d="M10 2L7 9H13Z" fill="#30b030"/><circle cx="10" cy="12" r="4.5" fill="#e8c030"/><path d="M2 15L6 12L5 19Z" fill="#4a78c8"/><path d="M20 15L15 12L16 19Z" fill="#d22"/></svg>
<svg class="a" style="left:34px;top:481px;" width="4" height="6" viewBox="0 0 4 6"><path d="M0 0L4 3L0 6Z" fill="#aaa"/></svg>
<div class="a" style="left:9px;top:492px;width:32px;height:1px;background:#555"></div>
<svg class="a" style="left:13px;top:500px;" width="22" height="20" viewBox="0 0 22 20"><path d="M3 12V8A6 6 0 0 1 15 8V12" fill="none" stroke="#c83838" stroke-width="4"/><rect x="1" y="11" width="4" height="4" fill="#eee"/><rect x="13" y="11" width="4" height="4" fill="#eee"/><path d="M10 10H21V20H10ZM15.5 10V20M10 15H21" fill="none" stroke="#ccc" stroke-width="1.1"/></svg>
<svg class="a" style="left:34px;top:518px;" width="4" height="6" viewBox="0 0 4 6"><path d="M0 0L4 3L0 6Z" fill="#aaa"/></svg>
<svg class="a" style="left:13px;top:528px;" width="22" height="20" viewBox="0 0 22 20"><path d="M3 12V8A6 6 0 0 1 15 8V12" fill="none" stroke="#c83838" stroke-width="4"/><rect x="1" y="11" width="4" height="4" fill="#eee"/><rect x="13" y="11" width="4" height="4" fill="#eee"/><path d="M3 18Q10 12 20 12" stroke="#ddd" stroke-width="1.3" fill="none"/></svg>
<svg class="a" style="left:34px;top:546px;" width="4" height="6" viewBox="0 0 4 6"><path d="M0 0L4 3L0 6Z" fill="#aaa"/></svg>
<svg class="a" style="left:13px;top:555px;" width="22" height="20" viewBox="0 0 22 20"><path d="M3 12V8A6 6 0 0 1 15 8V12" fill="none" stroke="#c83838" stroke-width="4"/><rect x="1" y="11" width="4" height="4" fill="#eee"/><rect x="13" y="11" width="4" height="4" fill="#eee"/><circle cx="17" cy="15" r="3" fill="#ccc"/></svg>
<svg class="a" style="left:34px;top:573px;" width="4" height="6" viewBox="0 0 4 6"><path d="M0 0L4 3L0 6Z" fill="#aaa"/></svg>
<svg class="a" style="left:13px;top:583px;" width="22" height="22" viewBox="0 0 22 22"><path d="M4 16V10A7 7 0 0 1 18 10V16" fill="none" stroke="#c83838" stroke-width="5"/><rect x="1.5" y="15" width="5" height="5" fill="#eee"/><rect x="15.5" y="15" width="5" height="5" fill="#eee"/></svg>
<svg class="a" style="left:34px;top:601px;" width="4" height="6" viewBox="0 0 4 6"><path d="M0 0L4 3L0 6Z" fill="#aaa"/></svg>
<div class="a" style="left:9px;top:612px;width:32px;height:1px;background:#555"></div>
<div class="a" style="left:10px;top:618px;width:28px;height:28px;background:#5d7595;border:1px solid #2a3040"></div>
<svg class="a" style="left:13px;top:622px;" width="22" height="20" viewBox="0 0 22 20"><circle cx="6" cy="8" r="4.5" fill="#333" stroke="#111"/><circle cx="13" cy="6" r="4" fill="#333" stroke="#111"/><rect x="6" y="10" width="10" height="7" fill="#2a2a2a" stroke="#111"/><path d="M16 11L21 9V17L16 15Z" fill="#222"/></svg>
<svg class="a" style="left:13px;top:650px;" width="22" height="22" viewBox="0 0 22 22"><circle cx="10" cy="10" r="8" fill="none" stroke="#ccc" stroke-width="1.4"/><path d="M2 10H18M10 2V18" stroke="#aaa" stroke-width="0.8"/><rect x="10" y="10" width="10" height="10" fill="#ccc" stroke="#d22" stroke-width="1.4"/></svg>
<svg class="a" style="left:13px;top:678px;" width="22" height="20" viewBox="0 0 22 20"><ellipse cx="11" cy="15" rx="10" ry="4" fill="#cde"/><rect x="5" y="3" width="12" height="10" rx="3" fill="#333" stroke="#ccc" stroke-width="1.2"/><path d="M6 6H16M6 9H16" stroke="#999"/></svg>
<svg class="a" style="left:34px;top:694px;" width="4" height="6" viewBox="0 0 4 6"><path d="M0 0L4 3L0 6Z" fill="#aaa"/></svg>
<svg class="a" style="left:13px;top:892px;" width="22" height="20" viewBox="0 0 22 20"><path d="M3 8L13 3L19 10L9 15Z" fill="#ddd" stroke="#888" stroke-width="0.6"/><path d="M3 8L9 15L10 17L3 10Z" fill="#c86030"/></svg>
<svg class="a" style="left:34px;top:905px;" width="4" height="6" viewBox="0 0 4 6"><path d="M0 0L4 3L0 6Z" fill="#aaa"/></svg>
<svg class="a" style="left:11px;top:916px;" width="24" height="22" viewBox="0 0 24 22"><ellipse cx="11" cy="11" rx="10" ry="8" fill="#bbb"/><circle cx="7" cy="9" r="2.5" fill="#777"/><circle cx="14" cy="8" r="2.5" fill="#777"/><circle cx="11" cy="14" r="2.5" fill="#777"/></svg>
<svg class="a" style="left:32px;top:932px;" width="4" height="6" viewBox="0 0 4 6"><path d="M0 0L4 3L0 6Z" fill="#aaa"/></svg>
<div class="a" style="left:1277px;top:224px;width:21px;height:22px;background:#5d7595;border:1px solid #2a3040"></div>
<svg class="a" style="left:1279px;top:227px;" width="18" height="16" viewBox="0 0 18 16"><path d="M1 8L9 3L17 8L9 13Z" fill="none" stroke="#ddd" stroke-width="1.2"/><path d="M5 8L9 5.5L13 8L9 10.5Z" fill="#bbb"/></svg>
<svg class="a" style="left:1279px;top:250px;" width="18" height="16" viewBox="0 0 18 16"><path d="M2 3H14L16 13H4Z" fill="#2a2a2a" stroke="#30a030" stroke-width="1.4"/><circle cx="9" cy="8" r="3" fill="none" stroke="#ccc"/></svg>
<svg class="a" style="left:1280px;top:274px;" width="14" height="18" viewBox="0 0 14 18"><path d="M3 8V5A4 4 0 0 1 11 5V8" fill="none" stroke="#ddd" stroke-width="1.8"/><rect x="1" y="8" width="12" height="9" fill="#ddd"/><path d="M1 11H13M1 14H13" stroke="#888"/></svg>
<svg class="a" style="left:1279px;top:298px;" width="16" height="18" viewBox="0 0 16 18"><circle cx="8" cy="7" r="6" fill="#333" stroke="#ccc"/><path d="M5 4L11 10M11 4L5 10" stroke="#ddd" stroke-width="1.4"/><rect x="6" y="13" width="4" height="4" fill="#888"/></svg>
<svg class="a" style="left:1278px;top:323px;" width="18" height="18" viewBox="0 0 18 18"><circle cx="9" cy="9" r="8" fill="#ccc"/><circle cx="11" cy="9" r="6" fill="#e8e8e8" stroke="#777"/></svg>
<div class="a" style="left:1277px;top:346px;width:21px;height:22px;background:#5d7595;border:1px solid #2a3040"></div>
<svg class="a" style="left:1280px;top:347px;" width="14" height="20" viewBox="0 0 14 20"><circle cx="7" cy="7" r="6" fill="#ddd"/><rect x="4" y="13" width="6" height="5" fill="#888"/></svg>
<svg class="a" style="left:1280px;top:371px;" width="14" height="20" viewBox="0 0 14 20"><circle cx="7" cy="7" r="6" fill="#e8e070"/><path d="M7 3V11M3 7H11" stroke="#222" stroke-width="1.6"/><rect x="4" y="13" width="6" height="5" fill="#888"/></svg>
<svg class="a" style="left:1278px;top:396px;" width="18" height="20" viewBox="0 0 18 20"><circle cx="9" cy="7" r="5.5" fill="#e8e8c0"/><path d="M9 3V11M5 7H13" stroke="#222" stroke-width="1.6"/><ellipse cx="9" cy="15" rx="8" ry="3" fill="none" stroke="#ccc"/></svg>
<div class="a" style="left:1277px;top:422px;width:21px;height:22px;background:#5d7595;border:1px solid #2a3040"></div>
<svg class="a" style="left:1279px;top:424px;" width="18" height="18" viewBox="0 0 18 18"><path d="M2 4L9 1L16 4V13L9 17L2 13Z" fill="#ddd"/><path d="M2 4L9 7V17L2 13ZM9 7L16 4V9L9 12Z" fill="#333"/></svg>
<svg class="a" style="left:1278px;top:449px;" width="20" height="18" viewBox="0 0 20 18"><path d="M1 8Q9 0 17 8" fill="none" stroke="#ccc" stroke-width="1.8"/><circle cx="8" cy="8" r="3" fill="#222" stroke="#ddd"/><path d="M12 12H18L15 15Z" fill="#999"/></svg>
<svg class="a" style="left:1278px;top:473px;" width="20" height="18" viewBox="0 0 20 18"><path d="M1 8Q9 0 17 8" fill="none" stroke="#ccc" stroke-width="1.8"/><rect x="2" y="9" width="9" height="8" fill="#ccc"/><path d="M4 11L9 13L4 15Z" fill="#333"/></svg>
<div class="a" style="left:1276px;top:495px;width:23px;height:1px;background:#555"></div>
<svg class="a" style="left:1283px;top:507px;" width="8" height="8" viewBox="0 0 8 8"><circle cx="4" cy="4" r="2.5" fill="#ddd"/></svg>
<svg class="a" style="left:1280px;top:530px;" width="14" height="14" viewBox="0 0 14 14"><path d="M2 12L12 2" stroke="#ddd" stroke-width="1.4"/><circle cx="4" cy="10" r="3" fill="#ddd"/></svg>
<svg class="a" style="left:1280px;top:554px;" width="14" height="14" viewBox="0 0 14 14"><path d="M2 12L12 2" stroke="#ddd" stroke-width="1.8"/></svg>
<svg class="a" style="left:1280px;top:578px;" width="16" height="16" viewBox="0 0 16 16"><text x="1" y="9" font-size="9" font-weight="bold" fill="#ddd" font-family="Liberation Sans">12</text><path d="M2 12L6 10" stroke="#ddd"/></svg>
<svg class="a" style="left:1279px;top:603px;" width="16" height="16" viewBox="0 0 16 16"><path d="M3 14L12 3L14 7L6 14Z" fill="#ddd"/></svg>
<svg class="a" style="left:1279px;top:628px;" width="16" height="16" viewBox="0 0 16 16"><path d="M2 14L12 4L14 6L5 14Z" fill="#ddd"/><rect x="2" y="12" width="5" height="3" fill="#ddd"/></svg>
<svg class="a" style="left:1279px;top:653px;" width="16" height="16" viewBox="0 0 16 16"><path d="M2 15V4Q2 2 4 2H15" fill="none" stroke="#ccc" stroke-width="1.4"/></svg>
<svg class="a" style="left:1279px;top:678px;" width="16" height="16" viewBox="0 0 16 16"><path d="M2 13Q6 4 15 3L12 9Z" fill="#9ab"/></svg>
<svg class="a" style="left:1279px;top:703px;" width="16" height="16" viewBox="0 0 16 16"><rect x="1" y="1" width="14" height="14" fill="#ccc"/><path d="M1 15L15 1" stroke="#c44" stroke-width="1.6"/></svg>
<svg class="a" style="left:1279px;top:728px;" width="16" height="16" viewBox="0 0 16 16"><path d="M8 1L15 8L8 15L1 8Z" fill="#ddd"/><path d="M8 5L11 8L8 11L5 8Z" fill="#4a78c8"/></svg>
<svg class="a" style="left:1279px;top:753px;" width="16" height="16" viewBox="0 0 16 16"><rect x="1" y="2" width="14" height="12" fill="#3a9a3a"/><path d="M3 5H13M3 8H13M3 11H13" stroke="#ddd"/></svg>
<svg class="a" style="left:1279px;top:778px;" width="16" height="16" viewBox="0 0 16 16"><path d="M2 14L10 6M10 6L14 2M8 4L12 8" stroke="#ddd" stroke-width="1.8"/></svg>
<svg class="a" style="left:1279px;top:803px;" width="16" height="16" viewBox="0 0 16 16"><rect x="2" y="2" width="12" height="12" rx="2" fill="#ddd"/><rect x="4" y="4" width="8" height="8" fill="#555"/></svg>
<div class="a" style="left:1277px;top:827px;width:21px;height:22px;background:#5d7595;border:1px solid #2a3040"></div>
<svg class="a" style="left:1279px;top:830px;" width="17" height="16" viewBox="0 0 17 16"><rect x="1" y="1" width="15" height="14" fill="#ddd"/><rect x="3" y="3" width="11" height="10" fill="#333"/><path d="M3 10L8 6L14 10" stroke="#ddd" fill="none"/></svg>
<div class="a" style="left:1277px;top:863px;width:21px;height:22px;background:#5d7595;border:1px solid #2a3040"></div>
<svg class="a" style="left:1280px;top:865px;" width="14" height="18" viewBox="0 0 14 18"><path d="M7 17Q1 9 1 6A6 6 0 0 1 13 6Q13 9 7 17Z" fill="#ddd"/><circle cx="7" cy="6" r="2.5" fill="#333"/></svg>
<svg class="a" style="left:1278px;top:896px;" width="18" height="18" viewBox="0 0 18 18"><circle cx="9" cy="9" r="8" fill="#3d474c" stroke="#e6e6e6" stroke-width="1.3"/><path d="M8 8L10 8L8.6 14H7Z" fill="#eee"/><circle cx="9.6" cy="5.2" r="1.2" fill="#eee"/></svg>
<div class="a" style="left:1276px;top:919px;width:23px;height:6px;background:#5d7595;border:1px solid #2a3040"></div>
<svg class="a" style="left:1282px;top:929px;" width="10" height="8" viewBox="0 0 10 8"><path d="M0 0H10L5 7Z" fill="#999"/></svg>
<div class="a" style="left:1306px;top:107px;width:614px;height:18px;background:#2b2b2b"></div>
<div class="a" style="left:1306px;top:107px;width:85px;height:19px;background:#474747"></div>
<div class="t" style="left:1313px;top:112.28px;font-size:10.3px;color:#c4c4c4;font-style:italic;">Parameters</div>
<svg class="a" style="left:1378px;top:114px;" width="6" height="6" viewBox="0 0 6 6"><path d="M1 1L5 5M5 1L1 5" stroke="#cfcfcf" stroke-width="1.3"/></svg>
<div class="a" style="left:1391px;top:108px;width:72px;height:17px;background:linear-gradient(90deg,#262626,#303030 8px,#303030);border-left:1px solid #1e1e1e"></div>
<div class="t" style="left:1398px;top:112.28px;font-size:10.3px;color:#c8c8c8;">Take List</div>
<svg class="a" style="left:1452px;top:114px;" width="6" height="6" viewBox="0 0 6 6"><path d="M1 1L5 5M5 1L1 5" stroke="#cfcfcf" stroke-width="1.3"/></svg>
<div class="a" style="left:1464px;top:108px;width:125px;height:17px;background:linear-gradient(90deg,#262626,#303030 8px,#303030);border-left:1px solid #1e1e1e"></div>
<div class="t" style="left:1472px;top:112.28px;font-size:10.3px;color:#c8c8c8;">Performance Monitor</div>
<svg class="a" style="left:1575px;top:114px;" width="6" height="6" viewBox="0 0 6 6"><path d="M1 1L5 5M5 1L1 5" stroke="#cfcfcf" stroke-width="1.3"/></svg>
<svg class="a" style="left:1596px;top:110px;" width="12" height="12" viewBox="0 0 12 12"><path d="M6 1V11M1 6H11" stroke="#e6e6e6" stroke-width="2.3"/></svg>
<div class="a" style="left:1887px;top:112px;width:12px;height:10px;background:linear-gradient(#f0f0f0,#cfcfcf);border:1px solid #222"></div>
<svg class="a" style="left:1907px;top:114px;" width="8" height="6" viewBox="0 0 8 6"><path d="M0 0H8L4 6Z" fill="#e8e8e8"/></svg>
<div class="a" style="left:1306px;top:125px;width:614px;height:34px;background:linear-gradient(#484848,#3a3a3a)"></div>
<svg class="a" style="left:1313px;top:136px;" width="40" height="14" viewBox="0 0 40 14"><path d="M1 7L7 1V4.5H13V9.5H7V13Z" fill="#5a5a5a"/><path d="M39 7L33 1V4.5H27V9.5H33V13Z" fill="#5a5a5a"/></svg>
<div class="a" style="left:1362px;top:131px;width:503px;height:23px;background:#3b3b3b;border:1px solid #151515;border-top-color:#0e0e0e;border-bottom-color:#1d1d1d"></div>
<div class="a" style="left:1846px;top:132px;width:18px;height:21px;background:#313131"></div>
<svg class="a" style="left:1851px;top:139px;" width="9" height="7" viewBox="0 0 9 7"><path d="M0 0H9L4.5 7Z" fill="#8a8a8a"/></svg>
<svg class="a" style="left:1370px;top:134px;" width="17" height="17" viewBox="0 0 17 17"><rect x="1" y="6" width="15" height="10" fill="#596064"/><rect x="1" y="10" width="15" height="6" fill="#7b8488"/><path d="M1 5.5L16 2V0.5L1 4Z" fill="#ccc"/><path d="M3.5 4.8L5 2.5M7.5 3.9L9 1.6M11.5 3L13 0.8" stroke="#333" stroke-width="1"/></svg>
<div class="t" style="left:1390px;top:137.27px;font-size:11.5px;color:#d8d8d8;">obj</div>
<svg class="a" style="left:1875px;top:136px;" width="18" height="14" viewBox="0 0 18 14"><path d="M0 7H8" stroke="#ddd" stroke-width="1.5"/><path d="M8 2.5L13 4V10L8 11.5Z" fill="#ccc"/><rect x="14" y="2" width="2" height="10" fill="#ddd"/></svg>
<svg class="a" style="left:1898px;top:134px;" width="18" height="18" viewBox="0 0 18 18"><circle cx="9" cy="9" r="8" fill="none" stroke="#5a7bb0" stroke-width="1.4"/><circle cx="9" cy="9" r="4.8" fill="none" stroke="#5a7bb0" stroke-width="1.4"/><circle cx="9" cy="9" r="1.8" fill="#3f7ad8"/></svg>
<div class="a" style="left:1306px;top:159px;width:614px;height:363px;background:#3a3a3a;border-top:1px solid #1c1c1c"></div>
<div class="t" style="left:1314px;width:600px;text-align:center;top:334.27px;font-size:10.9px;color:#8c8c8c;">No Operator Selected</div>
<div class="a" style="left:1306px;top:522px;width:614px;height:7px;background:#3c3c3c;border-top:1px solid #7a7a7a;border-bottom:1px solid #262626"></div>
<svg class="a" style="left:1580px;top:523px;" width="8" height="4" viewBox="0 0 8 4"><path d="M0 4H8L4 0Z" fill="#777"/></svg>
<svg class="a" style="left:1606px;top:523px;" width="20" height="4" viewBox="0 0 20 4"><rect x="0" y="0" width="1" height="1" fill="#222"/><rect x="0" y="2" width="1" height="1" fill="#222"/><rect x="2" y="0" width="1" height="1" fill="#222"/><rect x="2" y="2" width="1" height="1" fill="#222"/><rect x="4" y="0" width="1" height="1" fill="#222"/><rect x="4" y="2" width="1" height="1" fill="#222"/><rect x="6" y="0" width="1" height="1" fill="#222"/><rect x="6" y="2" width="1" height="1" fill="#222"/><rect x="8" y="0" width="1" height="1" fill="#222"/><rect x="8" y="2" width="1" height="1" fill="#222"/><rect x="10" y="0" width="1" height="1" fill="#222"/><rect x="10" y="2" width="1" height="1" fill="#222"/><rect x="12" y="0" width="1" height="1" fill="#222"/><rect x="12" y="2" width="1" height="1" fill="#222"/><rect x="14" y="0" width="1" height="1" fill="#222"/><rect x="14" y="2" width="1" height="1" fill="#222"/><rect x="16" y="0" width="1" height="1" fill="#222"/><rect x="16" y="2" width="1" height="1" fill="#222"/><rect x="18" y="0" width="1" height="1" fill="#222"/><rect x="18" y="2" width="1" height="1" fill="#222"/></svg>
<div class="a" style="left:1307px;top:529px;width:613px;height:18px;background:#2b2b2b"></div>
<div class="a" style="left:1307px;top:529px;width:54px;height:19px;background:#474747"></div>
<div class="t" style="left:1313px;top:534.28px;font-size:10.3px;color:#c4c4c4;font-style:italic;">/obj</div>
<svg class="a" style="left:1349px;top:536px;" width="6" height="6" viewBox="0 0 6 6"><path d="M1 1L5 5M5 1L1 5" stroke="#cfcfcf" stroke-width="1.3"/></svg>
<div class="a" style="left:1361px;top:530px;width:78px;height:17px;background:linear-gradient(90deg,#262626,#303030 8px,#303030);border-left:1px solid #1e1e1e"></div>
<div class="t" style="left:1368px;top:534.28px;font-size:10.3px;color:#c8c8c8;">Tree View</div>
<svg class="a" style="left:1426px;top:536px;" width="6" height="6" viewBox="0 0 6 6"><path d="M1 1L5 5M5 1L1 5" stroke="#cfcfcf" stroke-width="1.3"/></svg>
<div class="a" style="left:1439px;top:530px;width:101px;height:17px;background:linear-gradient(90deg,#262626,#303030 8px,#303030);border-left:1px solid #1e1e1e"></div>
<div class="t" style="left:1445px;top:534.28px;font-size:10.3px;color:#c8c8c8;">Material Palette</div>
<svg class="a" style="left:1526px;top:536px;" width="6" height="6" viewBox="0 0 6 6"><path d="M1 1L5 5M5 1L1 5" stroke="#cfcfcf" stroke-width="1.3"/></svg>
<div class="a" style="left:1540px;top:530px;width:93px;height:17px;background:linear-gradient(90deg,#262626,#303030 8px,#303030);border-left:1px solid #1e1e1e"></div>
<div class="t" style="left:1546px;top:534.28px;font-size:10.3px;color:#c8c8c8;">Asset Browser</div>
<svg class="a" style="left:1621px;top:536px;" width="6" height="6" viewBox="0 0 6 6"><path d="M1 1L5 5M5 1L1 5" stroke="#cfcfcf" stroke-width="1.3"/></svg>
<svg class="a" style="left:1641px;top:532px;" width="12" height="12" viewBox="0 0 12 12"><path d="M6 1V11M1 6H11" stroke="#e6e6e6" stroke-width="2.3"/></svg>
<div class="a" style="left:1887px;top:534px;width:12px;height:10px;background:linear-gradient(#f0f0f0,#cfcfcf);border:1px solid #222"></div>
<svg class="a" style="left:1907px;top:536px;" width="8" height="6" viewBox="0 0 8 6"><path d="M0 0H8L4 6Z" fill="#e8e8e8"/></svg>
<div class="a" style="left:1307px;top:547px;width:613px;height:34px;background:linear-gradient(#484848,#3a3a3a)"></div>
<svg class="a" style="left:1314px;top:558px;" width="40" height="14" viewBox="0 0 40 14"><path d="M1 7L7 1V4.5H13V9.5H7V13Z" fill="#5a5a5a"/><path d="M39 7L33 1V4.5H27V9.5H33V13Z" fill="#5a5a5a"/></svg>
<div class="a" style="left:1361px;top:553px;width:504px;height:23px;background:#3b3b3b;border:1px solid #151515;border-top-color:#0e0e0e;border-bottom-color:#1d1d1d"></div>
<div class="a" style="left:1846px;top:554px;width:18px;height:21px;background:#313131"></div>
<svg class="a" style="left:1851px;top:561px;" width="9" height="7" viewBox="0 0 9 7"><path d="M0 0H9L4.5 7Z" fill="#8a8a8a"/></svg>
<svg class="a" style="left:1369px;top:556px;" width="17" height="17" viewBox="0 0 17 17"><rect x="1" y="6" width="15" height="10" fill="#596064"/><rect x="1" y="10" width="15" height="6" fill="#7b8488"/><path d="M1 5.5L16 2V0.5L1 4Z" fill="#ccc"/><path d="M3.5 4.8L5 2.5M7.5 3.9L9 1.6M11.5 3L13 0.8" stroke="#333" stroke-width="1"/></svg>
<div class="t" style="left:1389px;top:559.27px;font-size:11.5px;color:#d8d8d8;">obj</div>
<svg class="a" style="left:1875px;top:558px;" width="18" height="14" viewBox="0 0 18 14"><path d="M0 7H8" stroke="#ddd" stroke-width="1.5"/><path d="M8 2.5L13 4V10L8 11.5Z" fill="#ccc"/><rect x="14" y="2" width="2" height="10" fill="#ddd"/></svg>
<svg class="a" style="left:1898px;top:556px;" width="18" height="18" viewBox="0 0 18 18"><circle cx="9" cy="9" r="8" fill="none" stroke="#5a7bb0" stroke-width="1.4"/><circle cx="9" cy="9" r="4.8" fill="none" stroke="#5a7bb0" stroke-width="1.4"/><circle cx="9" cy="9" r="1.8" fill="#3f7ad8"/></svg>
<div class="a" style="left:1307px;top:581px;width:613px;height:25px;background:#3a3a3a;border-top:1px solid #181818;border-bottom:1px solid #181818"></div>
<div class="a" style="left:1308px;top:582px;width:9px;height:24px;background:#3c3c3c;border-right:1px solid #111;border-left:1px solid #555"></div>
<svg class="a" style="left:1309px;top:584px;" width="7" height="6" viewBox="0 0 7 6"><path d="M3.5 0L7 6H0Z" fill="#000"/></svg>
<div class="t" style="left:1325px;top:588.68px;font-size:11.6px;color:#d6d6d6;">Add</div>
<div class="t" style="left:1361px;top:588.68px;font-size:11.6px;color:#d6d6d6;">Edit</div>
<div class="t" style="left:1397px;top:588.68px;font-size:11.6px;color:#d6d6d6;">Go</div>
<div class="t" style="left:1427px;top:588.68px;font-size:11.6px;color:#d6d6d6;">View</div>
<div class="t" style="left:1468px;top:588.68px;font-size:11.6px;color:#d6d6d6;">Tools</div>
<div class="t" style="left:1511px;top:588.68px;font-size:11.6px;color:#d6d6d6;">Layout</div>
<div class="t" style="left:1561px;top:588.68px;font-size:11.6px;color:#d6d6d6;">Labs</div>
<div class="t" style="left:1599px;top:588.68px;font-size:11.6px;color:#d6d6d6;">Help</div>
<svg class="a" style="left:1635px;top:586px;" width="17" height="17" viewBox="0 0 17 17"><path d="M2 3L14 15M14 3L2 15" stroke="#ddd" stroke-width="2.2"/><path d="M11 2L15 1L16 5" stroke="#ddd" stroke-width="1.6" fill="none"/></svg>
<svg class="a" style="left:1660px;top:586px;" width="17" height="17" viewBox="0 0 17 17"><rect x="2" y="1" width="4" height="4" fill="#ddd"/><path d="M4 5V14M4 8H8M4 11H8M4 14H8" stroke="#aaa"/><rect x="9" y="7" width="4" height="3" fill="#aaa"/><rect x="9" y="12" width="4" height="3" fill="#aaa"/></svg>
<svg class="a" style="left:1684px;top:586px;" width="17" height="17" viewBox="0 0 17 17"><rect x="2" y="2" width="12" height="14" fill="#cfcfc7"/><path d="M2 5H14M2 8H14M2 11H14M2 14H14" stroke="#888" stroke-width="0.8"/></svg>
<svg class="a" style="left:1715px;top:586px;" width="17" height="17" viewBox="0 0 17 17"><rect x="1" y="1" width="14" height="14" fill="#eee"/><rect x="2.5" y="2.5" width="3" height="3" fill="#c00"/><rect x="6.5" y="2.5" width="3" height="3" fill="#e80"/><rect x="10.5" y="2.5" width="3" height="3" fill="#dc0"/><rect x="2.5" y="6.5" width="3" height="3" fill="#24a"/><rect x="6.5" y="6.5" width="3" height="3" fill="#3a3"/><rect x="10.5" y="6.5" width="3" height="3" fill="#69c"/><rect x="2.5" y="10.5" width="3" height="3" fill="#111"/><rect x="6.5" y="10.5" width="3" height="3" fill="#888"/><rect x="10.5" y="10.5" width="3" height="3" fill="#ccc"/></svg>
<svg class="a" style="left:1740px;top:586px;" width="17" height="17" viewBox="0 0 17 17"><rect x="1" y="1" width="14" height="14" fill="none" stroke="#999"/><path d="M3 4H7M9 4H13M3 8H7M9 8H13M3 12H7M9 12H13" stroke="#aaa" stroke-width="1.4"/></svg>
<svg class="a" style="left:1771px;top:586px;" width="17" height="17" viewBox="0 0 17 17"><rect x="1" y="2" width="14" height="13" fill="#e8e8e8"/><rect x="3" y="5" width="6" height="3" fill="none" stroke="#222"/><rect x="7" y="10" width="6" height="3" fill="none" stroke="#222"/></svg>
<svg class="a" style="left:1795px;top:586px;" width="17" height="17" viewBox="0 0 17 17"><path d="M1 1H15V11L11 15H1Z" fill="#e3cc55"/><path d="M3 4H12M3 6.5H12M3 9H9" stroke="#222" stroke-width="1.1"/></svg>
<svg class="a" style="left:1819px;top:586px;" width="17" height="17" viewBox="0 0 17 17"><rect x="1" y="1" width="14" height="14" fill="#5a9ad8" stroke="#ddd"/><circle cx="5" cy="5" r="2" fill="#ee4"/><path d="M1 13L6 8L10 12L13 9L15 11V15H1Z" fill="#8cc"/><path d="M12 10V16M9 13H15" stroke="#fff" stroke-width="1.8"/></svg>
<svg class="a" style="left:1844px;top:586px;" width="17" height="17" viewBox="0 0 17 17"><path d="M1 5L8 2L15 5V13H1Z" fill="#d89a55"/><path d="M1 5H15V8H1Z" fill="#b87a35"/></svg>
<svg class="a" style="left:1875px;top:586px;" width="17" height="17" viewBox="0 0 17 17"><circle cx="7" cy="7" r="5" fill="none" stroke="#ccc" stroke-width="1.6"/><path d="M10.5 10.5L15 15" stroke="#ccc" stroke-width="2"/></svg>
<svg class="a" style="left:1899px;top:586px;" width="17" height="17" viewBox="0 0 17 17"><rect x="1" y="2" width="15" height="14" fill="#eee"/><ellipse cx="8.5" cy="9" rx="6" ry="3" fill="#fff" stroke="#333"/><circle cx="8.5" cy="9" r="2.2" fill="#222"/></svg>
<div class="a" style="left:1307px;top:606px;width:613px;height:337px;background:#303030"></div>
<div class="t" style="left:1309px;width:600px;text-align:right;top:625.03px;font-size:23px;color:#565656;font-weight:bold">Objects</div>
<div class="t" style="left:1312px;width:600px;text-align:center;top:786.99px;font-size:19.5px;color:#464646;">Empty Network</div>
<div class="t" style="left:1313px;width:600px;text-align:center;top:813.99px;font-size:19.5px;color:#464646;">Press Tab to Add Objects</div>
<div class="a" style="left:0px;top:943px;width:1920px;height:71px;background:#2f2f2f;border-top:1px solid #3a3a3a;box-shadow:inset 0 1px 0 #5a5a5a"></div>
<div class="a" style="left:0px;top:944px;width:10px;height:70px;background:#3a3a3a;border-right:1px solid #111"></div>
<svg class="a" style="left:2px;top:1003px;" width="7" height="6" viewBox="0 0 7 6"><path d="M0 0H7L3.5 6Z" fill="#000"/></svg>
<div class="a" style="left:15px;top:952px;width:26px;height:27px;background:linear-gradient(#4a4a4a,#3a3a3a);border:1px solid #1a1a1a"></div>
<div class="a" style="left:42px;top:952px;width:26px;height:27px;background:linear-gradient(#4a4a4a,#3a3a3a);border:1px solid #1a1a1a"></div>
<div class="a" style="left:69px;top:952px;width:26px;height:27px;background:linear-gradient(#6c87a8,#55708f);border:1px solid #1a1a1a"></div>
<div class="a" style="left:96px;top:952px;width:26px;height:27px;background:linear-gradient(#4a4a4a,#3a3a3a);border:1px solid #1a1a1a"></div>
<div class="a" style="left:123px;top:952px;width:26px;height:27px;background:linear-gradient(#4a4a4a,#3a3a3a);border:1px solid #1a1a1a"></div>
<svg class="a" style="left:18px;top:956px;" width="130" height="19" viewBox="0 0 130 19"><path d="M4 3V16" stroke="#ddd" stroke-width="2"/><path d="M13 3L6 9.5L13 16Z M21 3L14 9.5L21 16Z" fill="#ddd"/><path d="M45 3L36 9.5L45 16Z" fill="#ddd"/><rect x="58" y="3" width="13" height="13" fill="#e6e6e6"/><path d="M86 3L95 9.5L86 16Z" fill="#ddd"/><path d="M111 3L118 9.5L111 16Z M119 3L126 9.5L119 16Z" fill="#ddd"/><path d="M127 3V16" stroke="#ddd" stroke-width="2"/></svg>
<div class="a" style="left:153px;top:952px;width:46px;height:27px;background:#161616;border:1px solid #242424"></div>
<div class="t" style="left:158px;top:960.69px;font-size:11px;color:#e8e8e8;">1</div>
<div class="a" style="left:201px;top:952px;width:14px;height:27px;background:linear-gradient(#4a4a4a,#3a3a3a);border:1px solid #1a1a1a"></div>
<div class="a" style="left:215px;top:952px;width:14px;height:27px;background:linear-gradient(#4a4a4a,#3a3a3a);border:1px solid #1a1a1a"></div>
<svg class="a" style="left:204px;top:960px;" width="24" height="12" viewBox="0 0 24 12"><path d="M7 1L2 6L7 11Z" fill="#ddd"/><rect x="8" y="1" width="2" height="10" fill="#ddd"/><rect x="15" y="1" width="2" height="10" fill="#ddd"/><path d="M18 1L23 6L18 11Z" fill="#ddd"/></svg>
<div class="a" style="left:15px;top:987px;width:26px;height:24px;background:linear-gradient(#484848,#383838);border:1px solid #1a1a1a"></div>
<div class="a" style="left:42px;top:987px;width:26px;height:24px;background:linear-gradient(#484848,#383838);border:1px solid #1a1a1a"></div>
<div class="a" style="left:69px;top:987px;width:26px;height:24px;background:linear-gradient(#484848,#383838);border:1px solid #1a1a1a"></div>
<div class="a" style="left:96px;top:987px;width:26px;height:24px;background:linear-gradient(#484848,#383838);border:1px solid #1a1a1a"></div>
<div class="a" style="left:123px;top:987px;width:26px;height:24px;background:linear-gradient(#484848,#383838);border:1px solid #1a1a1a"></div>
<svg class="a" style="left:20px;top:989px;" width="128" height="20" viewBox="0 0 128 20"><rect x="3" y="3" width="13" height="12" fill="#ddd"/><rect x="3" y="3" width="13" height="3" fill="#999"/><path d="M11 9L11 19L13.5 16.5L16 20L17 19L15 15.5H18Z" fill="#fff" stroke="#111" stroke-width="0.6"/><ellipse cx="36" cy="10" rx="4" ry="8" fill="none" stroke="#ccc" stroke-width="1.2"/><path d="M28 7H31L36 3V17L31 13H28Z" fill="#888"/><path d="M56 14H73Q73 6 64 6Q58 6 57 10" fill="none" stroke="#ddd" stroke-width="1.8"/><path d="M54 7L57 12L60 8Z" fill="#ddd"/><path d="M70 16H76L73 19Z" fill="#999"/><circle cx="89" cy="10" r="7.5" fill="none" stroke="#ddd" stroke-width="1.4"/><path d="M89 5V10H93" stroke="#ddd" stroke-width="1.6" fill="none"/><path d="M108 6V14M111 6V10M115 6V10M118 6V14M121 6V10" stroke="#bbb" stroke-width="1.2"/><path d="M122 13L126 16L122 19Z" fill="#999"/></svg>
<div class="a" style="left:155px;top:987px;width:46px;height:24px;background:linear-gradient(#404040,#333);border:1px solid #1d1d1d"></div>
<div class="a" style="left:177px;top:987px;width:1px;height:24px;background:#1d1d1d"></div>
<svg class="a" style="left:162px;top:993px;" width="36" height="12" viewBox="0 0 36 12"><rect x="1" y="1" width="2" height="10" fill="#4d6a4d"/><path d="M10 1L4 6L10 11Z" fill="#5a5a5a"/><path d="M27 1L33 6L27 11Z" fill="#5a5a5a"/><rect x="34" y="1" width="2" height="10" fill="#4d6a4d"/></svg>
<div class="a" style="left:235px;top:967px;width:1429px;height:1px;background:#cacaca"></div>
<svg class="a" style="left:0px;top:0px;pointer-events:none" width="1920" height="1040" viewBox="0 0 1920 1040"><path d="M265.5 963V971M301.5 963V971M337.5 963V971M372.5 960V974M408.5 963V971M444.5 963V971M480.5 963V971M516.5 960V974M552.5 963V971M588.5 963V971M623.5 963V971M659.5 960V974M695.5 963V971M731.5 963V971M767.5 963V971M803.5 960V974M838.5 963V971M874.5 963V971M910.5 963V971M946.5 960V974M982.5 963V971M1018.5 963V971M1053.5 963V971M1089.5 960V974M1125.5 963V971M1161.5 963V971M1197.5 963V971M1233.5 960V974M1268.5 963V971M1304.5 963V971M1340.5 963V971M1376.5 960V974M1412.5 963V971M1448.5 963V971M1483.5 963V971M1519.5 960V974M1555.5 963V971M1591.5 963V971M1627.5 963V971M1663.5 960V974" stroke="#cfcfcf" stroke-width="1"/></svg>
<div class="t" style="left:372.0px;top:946.03px;font-size:10px;color:#9a9a9a;">24</div>
<div class="t" style="left:515.3444444444444px;top:946.03px;font-size:10px;color:#9a9a9a;">48</div>
<div class="t" style="left:658.6888888888889px;top:946.03px;font-size:10px;color:#9a9a9a;">72</div>
<div class="t" style="left:802.0333333333333px;top:946.03px;font-size:10px;color:#9a9a9a;">96</div>
<div class="t" style="left:945.3777777777777px;top:946.03px;font-size:10px;color:#9a9a9a;">120</div>
<div class="t" style="left:1088.7222222222222px;top:946.03px;font-size:10px;color:#9a9a9a;">144</div>
<div class="t" style="left:1232.0666666666666px;top:946.03px;font-size:10px;color:#9a9a9a;">168</div>
<div class="t" style="left:1375.411111111111px;top:946.03px;font-size:10px;color:#9a9a9a;">192</div>
<div class="t" style="left:1518.7555555555555px;top:946.03px;font-size:10px;color:#9a9a9a;">216</div>
<div class="t" style="left:1662.1px;top:946.03px;font-size:10px;color:#9a9a9a;">2</div>
<svg class="a" style="left:233px;top:945px;" width="30" height="26" viewBox="0 0 30 26"><path d="M2.5 1.5H26.5V19.5H9L3 23.5V1.5Z" fill="#000" stroke="#f0f0f0" stroke-width="1.4"/></svg>
<div class="t" style="left:-53px;width:600px;text-align:center;top:951.84px;font-size:12px;color:#ffffff;">1</div>
<div class="a" style="left:235px;top:989px;width:42px;height:20px;background:#161616;border:1px solid #262626"></div>
<div class="t" style="left:241px;top:994.19px;font-size:11px;color:#e0e0e0;">1</div>
<div class="a" style="left:280px;top:989px;width:42px;height:20px;background:#161616;border:1px solid #262626"></div>
<div class="t" style="left:286px;top:994.19px;font-size:11px;color:#e0e0e0;">1</div>
<div class="a" style="left:326px;top:997px;width:1250px;height:4px;background:#8a8a8a"></div>
<svg class="a" style="left:323px;top:990px;" width="8" height="18" viewBox="0 0 8 18"><path d="M0 0L7 9L0 18Z" fill="#999"/></svg>
<svg class="a" style="left:1571px;top:990px;" width="8" height="18" viewBox="0 0 8 18"><path d="M8 0L1 9L8 18Z" fill="#999"/></svg>
<div class="a" style="left:1580px;top:989px;width:42px;height:20px;background:#161616;border:1px solid #262626"></div>
<div class="t" style="left:1585px;top:993.93px;font-size:11.3px;color:#e6e6e6;font-family:"Liberation Mono"">240</div>
<div class="a" style="left:1625px;top:989px;width:42px;height:20px;background:#1a1a1a;border:1px solid #262626"></div>
<div class="t" style="left:1630px;top:993.93px;font-size:11.3px;color:#e6e6e6;font-family:"Liberation Mono"">240</div>
<svg class="a" style="left:1671px;top:957px;" width="60" height="42" viewBox="0 0 60 42"><circle cx="21" cy="20" r="19.5" fill="#333" stroke="#262626"/><rect x="38.5" y="11.5" width="16" height="19" fill="#3a3a3a" stroke="#262626"/><path d="M43 18H50L46.5 23Z" fill="#aaa"/><circle cx="24" cy="16" r="4.5" fill="none" stroke="#666" stroke-width="2.2"/><path d="M21 19L13 27M15 25L17 27M17 23L19 25" stroke="#666" stroke-width="2.2"/></svg>
<div class="a" style="left:1733px;top:953px;width:23px;height:23px;background:linear-gradient(#555,#3d3d3d);border:1px solid #1d1d1d"></div>
<svg class="a" style="left:1736px;top:956px;" width="18" height="18" viewBox="0 0 18 18"><rect x="1" y="1" width="16" height="16" fill="#ccc"/><path d="M4 9A5 5 0 0 1 13 6M14 9A5 5 0 0 1 5 12" fill="none" stroke="#222" stroke-width="1.6"/><rect x="1" y="5" width="2" height="3" fill="#d22"/><rect x="1" y="9" width="2" height="3" fill="#2a2"/><rect x="1" y="13" width="2" height="3" fill="#22d"/></svg>
<div class="a" style="left:1733px;top:982px;width:23px;height:23px;background:linear-gradient(#555,#3d3d3d);border:1px solid #1d1d1d"></div>
<svg class="a" style="left:1736px;top:985px;" width="18" height="18" viewBox="0 0 18 18"><rect x="1" y="1" width="16" height="16" fill="#111"/><path d="M2 9Q6 1 9 9T16 9" fill="none" stroke="#3a7ad8" stroke-width="1.3"/><path d="M2 9H16" stroke="#e8a030" stroke-width="1.2"/></svg>
<div class="a" style="left:1761px;top:953px;width:154px;height:24px;background:linear-gradient(#4a4a4a,#3a3a3a);border:1px solid #1d1d1d"></div>
<div class="t" style="left:1528px;width:600px;text-align:center;top:959.19px;font-size:11px;color:#dddddd;">0 keys, 0/0 channels</div>
<svg class="a" style="left:1900px;top:960px;" width="10" height="8" viewBox="0 0 10 8"><path d="M5 0L10 8H0Z" fill="#aaa"/></svg>
<div class="a" style="left:1760px;top:983px;width:153px;height:22px;background:linear-gradient(#484848,#3a3a3a);border:1px solid #1d1d1d"></div>
<div class="a" style="left:1890px;top:984px;width:22px;height:20px;background:#333"></div>
<div class="t" style="left:1514px;width:600px;text-align:center;top:988.69px;font-size:11px;color:#dddddd;">Key All Channels</div>
<svg class="a" style="left:1896px;top:987px;" width="9" height="14" viewBox="0 0 9 14"><path d="M4.5 0L9 5.5H0Z M4.5 14L9 8.5H0Z" fill="#aaa"/></svg>
<div class="a" style="left:0px;top:1014px;width:1920px;height:26px;background:#3a3a3a;border-top:1px solid #1a1a1a"></div>
<svg class="a" style="left:1750px;top:1018px;" width="22" height="20" viewBox="0 0 22 20"><path d="M3 9Q2 3 9 2Q16 1 17 7Q19 12 13 14H6Q2 13 3 9Z" fill="#cfcfcf"/><path d="M6 6Q9 8 8 11M11 4Q13 7 12 11" stroke="#999" fill="none"/><path d="M17 13L21 16L17 19Z" fill="#aaa"/></svg>
<svg class="a" style="left:1779px;top:1019px;" width="18" height="16" viewBox="0 0 18 16"><path d="M3 7A6 6 0 0 1 14 5" fill="none" stroke="#666" stroke-width="2"/><path d="M15 9A6 6 0 0 1 4 11" fill="none" stroke="#666" stroke-width="2"/><path d="M12 1L16 6L11 7Z M6 15L2 10L7 9Z" fill="#666"/></svg>
<div class="a" style="left:1802px;top:1015px;width:94px;height:24px;background:linear-gradient(#474747,#3b3b3b);border-left:1px solid #2a2a2a"></div>
<div class="a" style="left:1895px;top:1015px;width:25px;height:24px;background:#323232"></div>
<div class="t" style="left:1548px;width:600px;text-align:center;top:1021.19px;font-size:11px;color:#dddddd;">Auto Update</div>
<svg class="a" style="left:1903px;top:1020px;" width="9" height="14" viewBox="0 0 9 14"><path d="M4.5 0L9 5.5H0Z M4.5 14L9 8.5H0Z" fill="#aaa"/></svg>
<div class="a" style="left:293px;top:25px;width:68px;height:23px;background:#b06400"></div>
<div class="t" style="left:298.5px;top:31.01px;font-size:11.8px;color:#ffffff;">TeamOnes</div>
<div class="a" style="left:293px;top:48px;width:79px;height:142px;background:#3a3a3a;border-left:1px solid #9a9a9a;border-top:1px solid #666;box-shadow:1px 1px 0 #222"></div>
<div class="t" style="left:302px;top:53.01px;font-size:11.8px;color:#d4d4d4;">Assemble</div>
<div class="t" style="left:302px;top:73.01px;font-size:11.8px;color:#d4d4d4;">Workspace</div>
<div class="t" style="left:302px;top:93.01px;font-size:11.8px;color:#d4d4d4;">Validate</div>
<div class="t" style="left:302px;top:133.01px;font-size:11.8px;color:#d4d4d4;">Update</div>
<div class="t" style="left:302px;top:153.01px;font-size:11.8px;color:#d4d4d4;">Publish</div>
<div class="t" style="left:302px;top:173.01px;font-size:11.8px;color:#d4d4d4;">Tools</div>
<div class="a" style="left:297px;top:109px;width:74px;height:20px;background:#b06400"></div>
<div class="t" style="left:302px;top:113.51px;font-size:11.8px;color:#ffffff;">Daily</div>
<div class="a" style="left:286px;top:16px;width:82px;height:38px;border:4.5px solid #e83c26;border-radius:7px"></div>
<div class="a" style="left:292px;top:103px;width:97px;height:32px;border:4.5px solid #e83c26;border-radius:7px"></div></body></html>
